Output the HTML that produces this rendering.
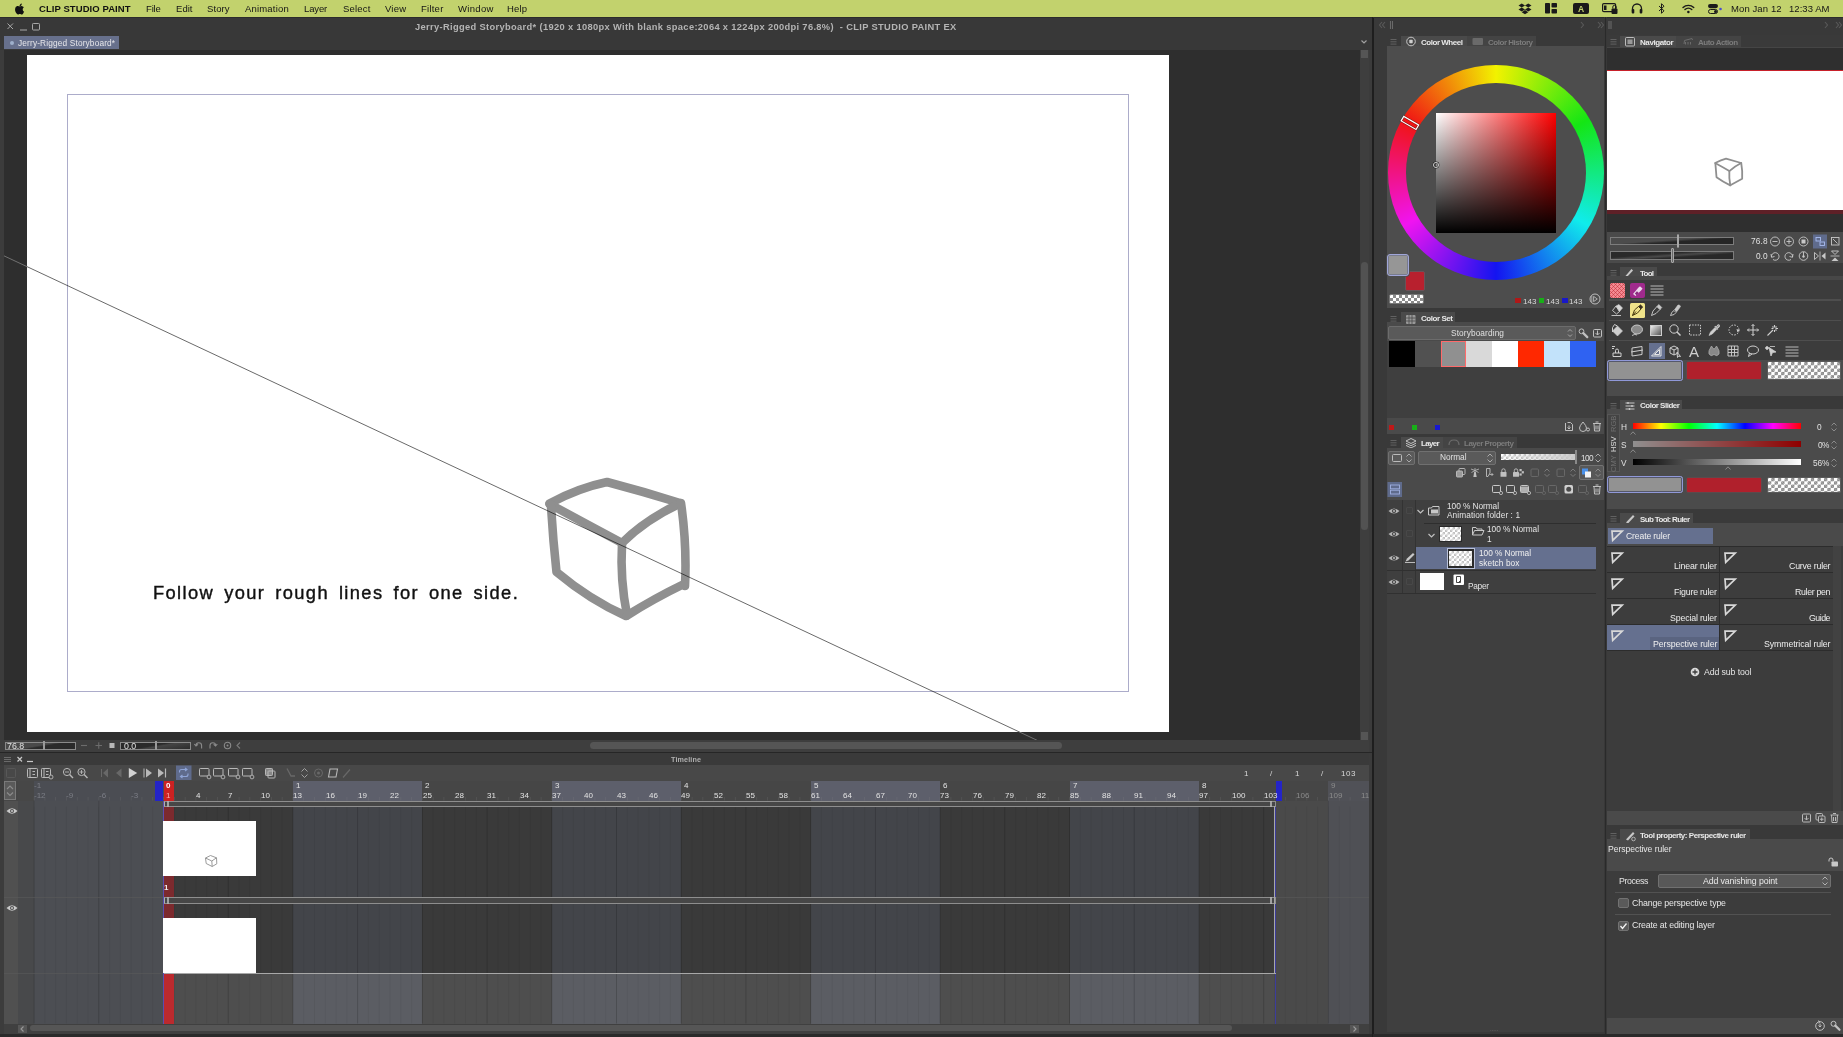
<!DOCTYPE html>
<html><head><meta charset="utf-8"><title>CLIP STUDIO PAINT</title>
<style>
html,body{margin:0;padding:0}
body{width:1843px;height:1037px;position:relative;overflow:hidden;background:#3b3b3b;-webkit-font-smoothing:antialiased;font-family:"Liberation Sans",sans-serif;}
div{position:absolute;box-sizing:border-box}
svg{position:absolute;overflow:visible}
.t{white-space:nowrap;line-height:1;will-change:transform;}
.ck{background-color:#fff;background-image:linear-gradient(45deg,#8c8c8c 25%,transparent 25%,transparent 75%,#8c8c8c 75%),linear-gradient(45deg,#8c8c8c 25%,transparent 25%,transparent 75%,#8c8c8c 75%);}
.ck2{background-color:#fff;background-image:linear-gradient(45deg,#c2c2c2 25%,transparent 25%,transparent 75%,#c2c2c2 75%),linear-gradient(45deg,#c2c2c2 25%,transparent 25%,transparent 75%,#c2c2c2 75%);}
</style></head><body>
<div style="left:0px;top:0px;width:1843px;height:17px;background:#c2d26d;"></div>
<svg style="left:14px;top:2px;" width="11" height="13" viewBox="0 0 11 13"><path d="M7.6 3.1c.6-.7.9-1.5.8-2.4-.8.1-1.6.5-2.1 1.1-.5.6-.9 1.400-.8 2.2.8.1 1.600-.3 2.100-.9zM8.400 3.700c-1.200-.1-2.100.700-2.700.700-.600 0-1.400-.600-2.300-.600-1.200 0-2.300.700-2.900 1.800-1.200 2.100-.300 5.300.900 7 .600.900 1.300 1.800 2.200 1.800.900 0 1.200-.600 2.300-.600s1.300.600 2.300.600c.900 0 1.500-.900 2.100-1.700.700-1 .900-1.900 1-2-.1 0-1.800-.700-1.800-2.700 0-1.700 1.400-2.500 1.400-2.500-.700-1.200-1.900-1.300-2.300-1.300z" transform="translate(1.1,1) scale(0.8)" fill="#111"/></svg>
<div class="t" style="left:38.7px;top:4px;font-size:9.5px;color:#111;font-weight:bold;letter-spacing:0.07px;">CLIP STUDIO PAINT</div>
<div class="t" style="left:145.5px;top:4px;font-size:9.5px;color:#151515;letter-spacing:-0.17px;">File</div>
<div class="t" style="left:175.5px;top:4px;font-size:9.5px;color:#151515;letter-spacing:0.04px;">Edit</div>
<div class="t" style="left:207.4px;top:4px;font-size:9.5px;color:#151515;letter-spacing:0.11px;">Story</div>
<div class="t" style="left:245.3px;top:4px;font-size:9.5px;color:#151515;letter-spacing:0.18px;">Animation</div>
<div class="t" style="left:303.8px;top:4px;font-size:9.5px;color:#151515;letter-spacing:-0.14px;">Layer</div>
<div class="t" style="left:342.6px;top:4px;font-size:9.5px;color:#151515;letter-spacing:0.20px;">Select</div>
<div class="t" style="left:385px;top:4px;font-size:9.5px;color:#151515;letter-spacing:0.19px;">View</div>
<div class="t" style="left:421.2px;top:4px;font-size:9.5px;color:#151515;letter-spacing:0.24px;">Filter</div>
<div class="t" style="left:457.6px;top:4px;font-size:9.5px;color:#151515;letter-spacing:0.32px;">Window</div>
<div class="t" style="left:507.4px;top:4px;font-size:9.5px;color:#151515;letter-spacing:0.19px;">Help</div>
<div class="t" style="left:1731px;top:4px;font-size:9.5px;color:#151515;letter-spacing:0.10px;">Mon Jan 12</div>
<div class="t" style="left:1788.5px;top:4px;font-size:9.5px;color:#151515;letter-spacing:0.05px;">12:33 AM</div>
<svg style="left:1518px;top:2px;transform:scale(0.93)" width="14" height="13" viewBox="0 0 14 13"><g fill="#1a1a1a"><path d="M3.5 1 L7 3.2 L3.5 5.400 L0 3.200Z"/><path d="M10.500 1 L14 3.200 L10.500 5.400 L7 3.200Z"/><path d="M3.500 5.400 L7 7.600 L3.500 9.800 L0 7.600Z" /><path d="M10.500 5.400 L14 7.600 L10.500 9.800 L7 7.600Z"/><path d="M3.500 10.400 L7 8.200 L10.500 10.400 L7 12.600Z"/></g></svg>
<svg style="left:1545px;top:3px;" width="12" height="11" viewBox="0 0 12 11"><g fill="#1a1a1a"><rect x="0" y="0" width="5" height="10.500" rx="0.800"/><rect x="6.500" y="0" width="5.500" height="4.500" rx="0.800"/><rect x="6.500" y="6" width="5.500" height="4.500" rx="0.800"/></g></svg>
<svg style="left:1573px;top:3px;" width="16" height="11" viewBox="0 0 16 11"><rect x="0" y="0" width="16" height="11" rx="2" fill="#1a1a1a"/></svg>
<div class="t" style="left:1578px;top:5px;font-size:8.5px;color:#c2d26d;font-weight:bold;">A</div>
<svg style="left:1602px;top:3px;" width="16" height="12" viewBox="0 0 16 12"><rect x="0.600" y="0.600" width="13" height="8" rx="1.200" fill="none" stroke="#1a1a1a" stroke-width="1.200"/><rect x="2" y="2.500" width="2.500" height="4.500" fill="#1a1a1a"/><rect x="9.500" y="5.500" width="6" height="5.500" rx="1" fill="#1a1a1a"/><path d="M10.800 5.500v-1.500a1.700 1.700 0 0 1 3.400 0v1.500" fill="none" stroke="#1a1a1a" stroke-width="1"/></svg>
<svg style="left:1631px;top:3px;" width="12" height="11" viewBox="0 0 12 11"><path d="M1.500 8.500v-3a4.500 4.500 0 0 1 9 0v3" fill="none" stroke="#1a1a1a" stroke-width="1.300"/><rect x="0.700" y="6" width="2.600" height="4.500" rx="1" fill="#1a1a1a"/><rect x="8.700" y="6" width="2.600" height="4.500" rx="1" fill="#1a1a1a"/></svg>
<svg style="left:1658px;top:3px;" width="8" height="11" viewBox="0 0 8 11"><path d="M1 3 L6 7.800 L3.500 10.300 V0.700 L6 3.200 L1 8" fill="none" stroke="#1a1a1a" stroke-width="1"/></svg>
<svg style="left:1681.5px;top:3.5px;" width="15" height="11" viewBox="0 0 15 11"><g transform="scale(0.85)"><g fill="none" stroke="#1a1a1a" stroke-width="1.700" stroke-linecap="round"><path d="M1.200 4.200a9 9 0 0 1 12.600 0"/><path d="M3.500 6.500a5.800 5.800 0 0 1 8 0"/></g><circle cx="7.500" cy="9.300" r="1.500" fill="#1a1a1a"/></g></svg>
<svg style="left:1708px;top:4px;" width="14" height="10" viewBox="0 0 14 10"><rect x="0" y="0" width="10" height="4.200" rx="2.100" fill="#1a1a1a"/><rect x="0.500" y="5.500" width="9" height="4" rx="2" fill="none" stroke="#1a1a1a" stroke-width="1"/><circle cx="7.500" cy="7.500" r="1.500" fill="#1a1a1a"/><circle cx="12.500" cy="5" r="1.300" fill="#4a4ad0"/></svg>
<div style="left:0px;top:17px;width:1373px;height:33px;background:#383838;"></div>
<div style="left:0px;top:17px;width:1373px;height:1px;background:#2c2c2c;"></div>
<div class="t" style="left:415px;top:23px;font-size:9.3px;color:#b4b4b4;font-weight:bold;letter-spacing:0.35px;">Jerry-Rigged Storyboard* (1920 x 1080px With blank space:2064 x 1224px 200dpi 76.8%)&nbsp; - CLIP STUDIO PAINT EX</div>
<svg style="left:6px;top:22px;" width="36" height="10" viewBox="0 0 36 10"><g fill="none" stroke="#a8a8a8" stroke-width="1"><path d="M1.500 1.500 L7 7 M7 1.500 L1.500 7"/><path d="M14 8 H21"/><rect x="26.500" y="1.500" width="7" height="6.500" rx="0.800"/></g></svg>
<div style="left:4px;top:36px;width:115px;height:13px;background:#67708c;"></div>
<div style="left:10px;top:41px;width:4px;height:4px;background:#9fb0cc;border-radius:2px;"></div>
<div class="t" style="left:17.5px;top:39px;font-size:8.3px;color:#e6e6ea;letter-spacing:0.15px;">Jerry-Rigged Storyboard*</div>
<svg style="left:1360px;top:39px;" width="8" height="6" viewBox="0 0 8 6"><path d="M1.500 1.500 L4 4 L6.500 1.500" fill="none" stroke="#a0a0a0" stroke-width="1.200"/></svg>
<div style="left:0px;top:50px;width:1369px;height:702px;background:#3c3c3c;"></div>
<div style="left:4px;top:50px;width:1356px;height:690px;background:#2e2e2e;"></div>
<div style="left:27px;top:55px;width:1141.5px;height:677px;background:#ffffff;"></div>
<div style="left:67px;top:94px;width:1062px;height:598px;border:1px solid #acacca;"></div>
<svg style="left:0;top:0" width="1369" height="752" viewBox="0 0 1369 752"><g fill="none" stroke="#8f8f8f" stroke-width="8.6" stroke-linecap="round" stroke-linejoin="round"><path d="M549.5 503.5 Q578 488 607 482 Q645 492 680 503"/><path d="M679 504 Q645 520 622 543"/><path d="M549.5 504 Q590 526 622 543"/><path d="M551 506 Q553 540 556.500 572 Q590 600 626 616"/><path d="M622 544 Q620 580 627 615"/><path d="M681 503 Q687 545 685 586"/><path d="M627 615.500 Q655 598 684 584"/></g></svg>
<svg style="left:4px;top:50px;overflow:hidden" width="23" height="690" viewBox="4 50 23 690"><line x1="3.9" y1="255.8" x2="1038.2" y2="740.8" stroke="#787878" stroke-width="0.9"/></svg>
<svg style="left:27px;top:732px;overflow:hidden" width="1100" height="9" viewBox="27 732 1100 9"><line x1="3.9" y1="255.8" x2="1038.2" y2="740.8" stroke="#787878" stroke-width="0.9"/></svg>
<svg style="left:27px;top:55px;overflow:hidden" width="1141.5" height="677" viewBox="27 55 1141.5 677"><line x1="3.9" y1="255.8" x2="1038.2" y2="740.8" stroke="#000" stroke-opacity="0.66" stroke-width="0.9"/></svg>
<div class="t" style="left:152.5px;top:584px;font-size:18.3px;color:#111;letter-spacing:1.39px;word-spacing:3.5px;-webkit-text-stroke:0.4px #111;">Follow your rough lines for one side.</div>
<div style="left:1360px;top:50px;width:9px;height:690px;background:#3e3e3e;"></div>
<div style="left:1361px;top:50px;width:7px;height:8px;background:#555;"></div>
<div style="left:1361px;top:732px;width:7px;height:8px;background:#555;"></div>
<div style="left:1361px;top:262px;width:7px;height:268px;background:#525252;border-radius:3.5px;"></div>
<div style="left:0px;top:740px;width:1369px;height:12px;background:#3e3e3e;"></div>
<div style="left:590px;top:741.5px;width:472px;height:7px;background:#555555;border-radius:3.5px;"></div>
<div style="left:0px;top:752px;width:1369px;height:285px;background:#3c3c3c;"></div>
<div style="left:0px;top:751.5px;width:1373px;height:1.5px;background:#262626;"></div>
<div style="left:0px;top:753px;width:1369px;height:12px;background:#3a3a3a;"></div>
<div class="t" style="left:671px;top:756px;font-size:7.2px;color:#b0b0b0;font-weight:bold;letter-spacing:0.13px;">Timeline</div>
<svg style="left:3px;top:754px;" width="30" height="10" viewBox="0 0 30 10"><g fill="none" stroke="#6a6a6a" stroke-width="1"><path d="M1 3.500H8M1 5.500H8M1 7.500H8"/></g><g fill="none" stroke="#c8c8c8" stroke-width="1.200"><path d="M14.500 3 L19 7.500 M19 3 L14.500 7.500"/><path d="M24 7.500H30"/></g></svg>
<div style="left:4px;top:765px;width:1365px;height:15.5px;background:#484848;"></div>
<div style="left:4px;top:780.5px;width:1365px;height:20px;background:#464646;"></div>
<div style="left:18px;top:780.5px;width:145.5px;height:20px;background:#4b4d53;"></div>
<div style="left:18px;top:780.5px;width:16px;height:20px;background:#474747;"></div>
<div style="left:4px;top:800.5px;width:14px;height:223px;background:#505050;"></div>
<div style="left:18px;top:800.5px;width:145.5px;height:223px;background:#4c4e53;"></div>
<div style="left:18px;top:800.5px;width:16px;height:223px;background:#48494b;"></div>
<div style="left:163.5px;top:800.5px;width:1111.0px;height:173px;background:#3a3a3a;"></div>
<div style="left:163.5px;top:973.5px;width:1111.0px;height:50px;background:#4e4e4e;"></div>
<div style="left:1274.5px;top:800.5px;width:94.5px;height:223px;background:#4a4a4a;"></div>
<div style="left:292.9px;top:780.5px;width:129.4px;height:20px;background:#5d5f6b;"></div>
<div style="left:292.9px;top:806.5px;width:129.4px;height:167px;background:#43454a;"></div>
<div style="left:292.9px;top:973.5px;width:129.4px;height:50px;background:#5b5d63;"></div>
<div style="left:551.8px;top:780.5px;width:129.4px;height:20px;background:#5d5f6b;"></div>
<div style="left:551.8px;top:806.5px;width:129.4px;height:167px;background:#43454a;"></div>
<div style="left:551.8px;top:973.5px;width:129.4px;height:50px;background:#5b5d63;"></div>
<div style="left:810.7px;top:780.5px;width:129.4px;height:20px;background:#5d5f6b;"></div>
<div style="left:810.7px;top:806.5px;width:129.4px;height:167px;background:#43454a;"></div>
<div style="left:810.7px;top:973.5px;width:129.4px;height:50px;background:#5b5d63;"></div>
<div style="left:1069.5px;top:780.5px;width:129.4px;height:20px;background:#5d5f6b;"></div>
<div style="left:1069.5px;top:806.5px;width:129.4px;height:167px;background:#43454a;"></div>
<div style="left:1069.5px;top:973.5px;width:129.4px;height:50px;background:#5b5d63;"></div>
<div style="left:1328.4px;top:780.5px;width:40.6px;height:20px;background:#505157;"></div>
<div style="left:1328.4px;top:800.5px;width:40.6px;height:223px;background:#4f5055;"></div>
<svg style="left:0;top:0" width="1369" height="1037" viewBox="0 0 1369 1037"><rect x="33.6" y="800.5" width="1" height="223" fill="#000" opacity="0.13"/><rect x="98.3" y="800.5" width="1" height="223" fill="#000" opacity="0.13"/><rect x="163.0" y="800.5" width="1" height="223" fill="#000" opacity="0.13"/><rect x="227.7" y="800.5" width="1" height="223" fill="#000" opacity="0.13"/><rect x="292.4" y="800.5" width="1" height="223" fill="#000" opacity="0.13"/><rect x="357.1" y="800.5" width="1" height="223" fill="#000" opacity="0.13"/><rect x="421.9" y="800.5" width="1" height="223" fill="#000" opacity="0.13"/><rect x="486.6" y="800.5" width="1" height="223" fill="#000" opacity="0.13"/><rect x="551.3" y="800.5" width="1" height="223" fill="#000" opacity="0.13"/><rect x="616.0" y="800.5" width="1" height="223" fill="#000" opacity="0.13"/><rect x="680.7" y="800.5" width="1" height="223" fill="#000" opacity="0.13"/><rect x="745.4" y="800.5" width="1" height="223" fill="#000" opacity="0.13"/><rect x="810.2" y="800.5" width="1" height="223" fill="#000" opacity="0.13"/><rect x="874.9" y="800.5" width="1" height="223" fill="#000" opacity="0.13"/><rect x="939.6" y="800.5" width="1" height="223" fill="#000" opacity="0.13"/><rect x="1004.3" y="800.5" width="1" height="223" fill="#000" opacity="0.13"/><rect x="1069.0" y="800.5" width="1" height="223" fill="#000" opacity="0.13"/><rect x="1133.7" y="800.5" width="1" height="223" fill="#000" opacity="0.13"/><rect x="1198.5" y="800.5" width="1" height="223" fill="#000" opacity="0.13"/><rect x="1263.2" y="800.5" width="1" height="223" fill="#000" opacity="0.13"/><rect x="1327.9" y="800.5" width="1" height="223" fill="#000" opacity="0.13"/><rect x="33.6" y="806.5" width="1" height="217" fill="#000" opacity="0.05"/><rect x="33.8" y="797" width="0.7" height="3.5" fill="#8a8a8a" opacity="0.25"/><rect x="44.4" y="806.5" width="1" height="217" fill="#000" opacity="0.05"/><rect x="44.6" y="797" width="0.7" height="3.5" fill="#8a8a8a" opacity="0.25"/><rect x="55.1" y="806.5" width="1" height="217" fill="#000" opacity="0.05"/><rect x="55.3" y="797" width="0.7" height="3.5" fill="#8a8a8a" opacity="0.25"/><rect x="65.9" y="806.5" width="1" height="217" fill="#000" opacity="0.05"/><rect x="66.1" y="797" width="0.7" height="3.5" fill="#8a8a8a" opacity="0.25"/><rect x="76.7" y="806.5" width="1" height="217" fill="#000" opacity="0.05"/><rect x="76.9" y="797" width="0.7" height="3.5" fill="#8a8a8a" opacity="0.25"/><rect x="87.5" y="806.5" width="1" height="217" fill="#000" opacity="0.05"/><rect x="87.7" y="797" width="0.7" height="3.5" fill="#8a8a8a" opacity="0.25"/><rect x="98.3" y="806.5" width="1" height="217" fill="#000" opacity="0.05"/><rect x="98.5" y="797" width="0.7" height="3.5" fill="#8a8a8a" opacity="0.25"/><rect x="109.1" y="806.5" width="1" height="217" fill="#000" opacity="0.05"/><rect x="109.3" y="797" width="0.7" height="3.5" fill="#8a8a8a" opacity="0.25"/><rect x="119.9" y="806.5" width="1" height="217" fill="#000" opacity="0.05"/><rect x="120.1" y="797" width="0.7" height="3.5" fill="#8a8a8a" opacity="0.25"/><rect x="130.6" y="806.5" width="1" height="217" fill="#000" opacity="0.05"/><rect x="130.8" y="797" width="0.7" height="3.5" fill="#8a8a8a" opacity="0.25"/><rect x="141.4" y="806.5" width="1" height="217" fill="#000" opacity="0.05"/><rect x="141.6" y="797" width="0.7" height="3.5" fill="#8a8a8a" opacity="0.25"/><rect x="152.2" y="806.5" width="1" height="217" fill="#000" opacity="0.05"/><rect x="152.4" y="797" width="0.7" height="3.5" fill="#8a8a8a" opacity="0.25"/><rect x="163.0" y="806.5" width="1" height="217" fill="#000" opacity="0.05"/><rect x="163.2" y="797" width="0.7" height="3.5" fill="#8a8a8a" opacity="0.25"/><rect x="173.8" y="806.5" width="1" height="217" fill="#000" opacity="0.05"/><rect x="174.0" y="797" width="0.7" height="3.5" fill="#8a8a8a" opacity="0.25"/><rect x="184.6" y="806.5" width="1" height="217" fill="#000" opacity="0.05"/><rect x="184.8" y="797" width="0.7" height="3.5" fill="#8a8a8a" opacity="0.25"/><rect x="195.4" y="806.5" width="1" height="217" fill="#000" opacity="0.05"/><rect x="195.6" y="797" width="0.7" height="3.5" fill="#8a8a8a" opacity="0.25"/><rect x="206.1" y="806.5" width="1" height="217" fill="#000" opacity="0.05"/><rect x="206.3" y="797" width="0.7" height="3.5" fill="#8a8a8a" opacity="0.25"/><rect x="216.9" y="806.5" width="1" height="217" fill="#000" opacity="0.05"/><rect x="217.1" y="797" width="0.7" height="3.5" fill="#8a8a8a" opacity="0.25"/><rect x="227.7" y="806.5" width="1" height="217" fill="#000" opacity="0.05"/><rect x="227.9" y="797" width="0.7" height="3.5" fill="#8a8a8a" opacity="0.25"/><rect x="238.5" y="806.5" width="1" height="217" fill="#000" opacity="0.05"/><rect x="238.7" y="797" width="0.7" height="3.5" fill="#8a8a8a" opacity="0.25"/><rect x="249.3" y="806.5" width="1" height="217" fill="#000" opacity="0.05"/><rect x="249.5" y="797" width="0.7" height="3.5" fill="#8a8a8a" opacity="0.25"/><rect x="260.1" y="806.5" width="1" height="217" fill="#000" opacity="0.05"/><rect x="260.3" y="797" width="0.7" height="3.5" fill="#8a8a8a" opacity="0.25"/><rect x="270.9" y="806.5" width="1" height="217" fill="#000" opacity="0.05"/><rect x="271.1" y="797" width="0.7" height="3.5" fill="#8a8a8a" opacity="0.25"/><rect x="281.6" y="806.5" width="1" height="217" fill="#000" opacity="0.05"/><rect x="281.8" y="797" width="0.7" height="3.5" fill="#8a8a8a" opacity="0.25"/><rect x="292.4" y="806.5" width="1" height="217" fill="#000" opacity="0.05"/><rect x="292.6" y="797" width="0.7" height="3.5" fill="#8a8a8a" opacity="0.25"/><rect x="303.2" y="806.5" width="1" height="217" fill="#000" opacity="0.05"/><rect x="303.4" y="797" width="0.7" height="3.5" fill="#8a8a8a" opacity="0.25"/><rect x="314.0" y="806.5" width="1" height="217" fill="#000" opacity="0.05"/><rect x="314.2" y="797" width="0.7" height="3.5" fill="#8a8a8a" opacity="0.25"/><rect x="324.8" y="806.5" width="1" height="217" fill="#000" opacity="0.05"/><rect x="325.0" y="797" width="0.7" height="3.5" fill="#8a8a8a" opacity="0.25"/><rect x="335.6" y="806.5" width="1" height="217" fill="#000" opacity="0.05"/><rect x="335.8" y="797" width="0.7" height="3.5" fill="#8a8a8a" opacity="0.25"/><rect x="346.4" y="806.5" width="1" height="217" fill="#000" opacity="0.05"/><rect x="346.6" y="797" width="0.7" height="3.5" fill="#8a8a8a" opacity="0.25"/><rect x="357.1" y="806.5" width="1" height="217" fill="#000" opacity="0.05"/><rect x="357.3" y="797" width="0.7" height="3.5" fill="#8a8a8a" opacity="0.25"/><rect x="367.9" y="806.5" width="1" height="217" fill="#000" opacity="0.05"/><rect x="368.1" y="797" width="0.7" height="3.5" fill="#8a8a8a" opacity="0.25"/><rect x="378.7" y="806.5" width="1" height="217" fill="#000" opacity="0.05"/><rect x="378.9" y="797" width="0.7" height="3.5" fill="#8a8a8a" opacity="0.25"/><rect x="389.5" y="806.5" width="1" height="217" fill="#000" opacity="0.05"/><rect x="389.7" y="797" width="0.7" height="3.5" fill="#8a8a8a" opacity="0.25"/><rect x="400.3" y="806.5" width="1" height="217" fill="#000" opacity="0.05"/><rect x="400.5" y="797" width="0.7" height="3.5" fill="#8a8a8a" opacity="0.25"/><rect x="411.1" y="806.5" width="1" height="217" fill="#000" opacity="0.05"/><rect x="411.3" y="797" width="0.7" height="3.5" fill="#8a8a8a" opacity="0.25"/><rect x="421.9" y="806.5" width="1" height="217" fill="#000" opacity="0.05"/><rect x="422.1" y="797" width="0.7" height="3.5" fill="#8a8a8a" opacity="0.25"/><rect x="432.6" y="806.5" width="1" height="217" fill="#000" opacity="0.05"/><rect x="432.8" y="797" width="0.7" height="3.5" fill="#8a8a8a" opacity="0.25"/><rect x="443.4" y="806.5" width="1" height="217" fill="#000" opacity="0.05"/><rect x="443.6" y="797" width="0.7" height="3.5" fill="#8a8a8a" opacity="0.25"/><rect x="454.2" y="806.5" width="1" height="217" fill="#000" opacity="0.05"/><rect x="454.4" y="797" width="0.7" height="3.5" fill="#8a8a8a" opacity="0.25"/><rect x="465.0" y="806.5" width="1" height="217" fill="#000" opacity="0.05"/><rect x="465.2" y="797" width="0.7" height="3.5" fill="#8a8a8a" opacity="0.25"/><rect x="475.8" y="806.5" width="1" height="217" fill="#000" opacity="0.05"/><rect x="476.0" y="797" width="0.7" height="3.5" fill="#8a8a8a" opacity="0.25"/><rect x="486.6" y="806.5" width="1" height="217" fill="#000" opacity="0.05"/><rect x="486.8" y="797" width="0.7" height="3.5" fill="#8a8a8a" opacity="0.25"/><rect x="497.4" y="806.5" width="1" height="217" fill="#000" opacity="0.05"/><rect x="497.6" y="797" width="0.7" height="3.5" fill="#8a8a8a" opacity="0.25"/><rect x="508.2" y="806.5" width="1" height="217" fill="#000" opacity="0.05"/><rect x="508.4" y="797" width="0.7" height="3.5" fill="#8a8a8a" opacity="0.25"/><rect x="518.9" y="806.5" width="1" height="217" fill="#000" opacity="0.05"/><rect x="519.1" y="797" width="0.7" height="3.5" fill="#8a8a8a" opacity="0.25"/><rect x="529.7" y="806.5" width="1" height="217" fill="#000" opacity="0.05"/><rect x="529.9" y="797" width="0.7" height="3.5" fill="#8a8a8a" opacity="0.25"/><rect x="540.5" y="806.5" width="1" height="217" fill="#000" opacity="0.05"/><rect x="540.7" y="797" width="0.7" height="3.5" fill="#8a8a8a" opacity="0.25"/><rect x="551.3" y="806.5" width="1" height="217" fill="#000" opacity="0.05"/><rect x="551.5" y="797" width="0.7" height="3.5" fill="#8a8a8a" opacity="0.25"/><rect x="562.1" y="806.5" width="1" height="217" fill="#000" opacity="0.05"/><rect x="562.3" y="797" width="0.7" height="3.5" fill="#8a8a8a" opacity="0.25"/><rect x="572.9" y="806.5" width="1" height="217" fill="#000" opacity="0.05"/><rect x="573.1" y="797" width="0.7" height="3.5" fill="#8a8a8a" opacity="0.25"/><rect x="583.7" y="806.5" width="1" height="217" fill="#000" opacity="0.05"/><rect x="583.9" y="797" width="0.7" height="3.5" fill="#8a8a8a" opacity="0.25"/><rect x="594.4" y="806.5" width="1" height="217" fill="#000" opacity="0.05"/><rect x="594.6" y="797" width="0.7" height="3.5" fill="#8a8a8a" opacity="0.25"/><rect x="605.2" y="806.5" width="1" height="217" fill="#000" opacity="0.05"/><rect x="605.4" y="797" width="0.7" height="3.5" fill="#8a8a8a" opacity="0.25"/><rect x="616.0" y="806.5" width="1" height="217" fill="#000" opacity="0.05"/><rect x="616.2" y="797" width="0.7" height="3.5" fill="#8a8a8a" opacity="0.25"/><rect x="626.8" y="806.5" width="1" height="217" fill="#000" opacity="0.05"/><rect x="627.0" y="797" width="0.7" height="3.5" fill="#8a8a8a" opacity="0.25"/><rect x="637.6" y="806.5" width="1" height="217" fill="#000" opacity="0.05"/><rect x="637.8" y="797" width="0.7" height="3.5" fill="#8a8a8a" opacity="0.25"/><rect x="648.4" y="806.5" width="1" height="217" fill="#000" opacity="0.05"/><rect x="648.6" y="797" width="0.7" height="3.5" fill="#8a8a8a" opacity="0.25"/><rect x="659.2" y="806.5" width="1" height="217" fill="#000" opacity="0.05"/><rect x="659.4" y="797" width="0.7" height="3.5" fill="#8a8a8a" opacity="0.25"/><rect x="669.9" y="806.5" width="1" height="217" fill="#000" opacity="0.05"/><rect x="670.1" y="797" width="0.7" height="3.5" fill="#8a8a8a" opacity="0.25"/><rect x="680.7" y="806.5" width="1" height="217" fill="#000" opacity="0.05"/><rect x="680.9" y="797" width="0.7" height="3.5" fill="#8a8a8a" opacity="0.25"/><rect x="691.5" y="806.5" width="1" height="217" fill="#000" opacity="0.05"/><rect x="691.7" y="797" width="0.7" height="3.5" fill="#8a8a8a" opacity="0.25"/><rect x="702.3" y="806.5" width="1" height="217" fill="#000" opacity="0.05"/><rect x="702.5" y="797" width="0.7" height="3.5" fill="#8a8a8a" opacity="0.25"/><rect x="713.1" y="806.5" width="1" height="217" fill="#000" opacity="0.05"/><rect x="713.3" y="797" width="0.7" height="3.5" fill="#8a8a8a" opacity="0.25"/><rect x="723.9" y="806.5" width="1" height="217" fill="#000" opacity="0.05"/><rect x="724.1" y="797" width="0.7" height="3.5" fill="#8a8a8a" opacity="0.25"/><rect x="734.7" y="806.5" width="1" height="217" fill="#000" opacity="0.05"/><rect x="734.9" y="797" width="0.7" height="3.5" fill="#8a8a8a" opacity="0.25"/><rect x="745.4" y="806.5" width="1" height="217" fill="#000" opacity="0.05"/><rect x="745.6" y="797" width="0.7" height="3.5" fill="#8a8a8a" opacity="0.25"/><rect x="756.2" y="806.5" width="1" height="217" fill="#000" opacity="0.05"/><rect x="756.4" y="797" width="0.7" height="3.5" fill="#8a8a8a" opacity="0.25"/><rect x="767.0" y="806.5" width="1" height="217" fill="#000" opacity="0.05"/><rect x="767.2" y="797" width="0.7" height="3.5" fill="#8a8a8a" opacity="0.25"/><rect x="777.8" y="806.5" width="1" height="217" fill="#000" opacity="0.05"/><rect x="778.0" y="797" width="0.7" height="3.5" fill="#8a8a8a" opacity="0.25"/><rect x="788.6" y="806.5" width="1" height="217" fill="#000" opacity="0.05"/><rect x="788.8" y="797" width="0.7" height="3.5" fill="#8a8a8a" opacity="0.25"/><rect x="799.4" y="806.5" width="1" height="217" fill="#000" opacity="0.05"/><rect x="799.6" y="797" width="0.7" height="3.5" fill="#8a8a8a" opacity="0.25"/><rect x="810.2" y="806.5" width="1" height="217" fill="#000" opacity="0.05"/><rect x="810.4" y="797" width="0.7" height="3.5" fill="#8a8a8a" opacity="0.25"/><rect x="820.9" y="806.5" width="1" height="217" fill="#000" opacity="0.05"/><rect x="821.1" y="797" width="0.7" height="3.5" fill="#8a8a8a" opacity="0.25"/><rect x="831.7" y="806.5" width="1" height="217" fill="#000" opacity="0.05"/><rect x="831.9" y="797" width="0.7" height="3.5" fill="#8a8a8a" opacity="0.25"/><rect x="842.5" y="806.5" width="1" height="217" fill="#000" opacity="0.05"/><rect x="842.7" y="797" width="0.7" height="3.5" fill="#8a8a8a" opacity="0.25"/><rect x="853.3" y="806.5" width="1" height="217" fill="#000" opacity="0.05"/><rect x="853.5" y="797" width="0.7" height="3.5" fill="#8a8a8a" opacity="0.25"/><rect x="864.1" y="806.5" width="1" height="217" fill="#000" opacity="0.05"/><rect x="864.3" y="797" width="0.7" height="3.5" fill="#8a8a8a" opacity="0.25"/><rect x="874.9" y="806.5" width="1" height="217" fill="#000" opacity="0.05"/><rect x="875.1" y="797" width="0.7" height="3.5" fill="#8a8a8a" opacity="0.25"/><rect x="885.7" y="806.5" width="1" height="217" fill="#000" opacity="0.05"/><rect x="885.9" y="797" width="0.7" height="3.5" fill="#8a8a8a" opacity="0.25"/><rect x="896.4" y="806.5" width="1" height="217" fill="#000" opacity="0.05"/><rect x="896.6" y="797" width="0.7" height="3.5" fill="#8a8a8a" opacity="0.25"/><rect x="907.2" y="806.5" width="1" height="217" fill="#000" opacity="0.05"/><rect x="907.4" y="797" width="0.7" height="3.5" fill="#8a8a8a" opacity="0.25"/><rect x="918.0" y="806.5" width="1" height="217" fill="#000" opacity="0.05"/><rect x="918.2" y="797" width="0.7" height="3.5" fill="#8a8a8a" opacity="0.25"/><rect x="928.8" y="806.5" width="1" height="217" fill="#000" opacity="0.05"/><rect x="929.0" y="797" width="0.7" height="3.5" fill="#8a8a8a" opacity="0.25"/><rect x="939.6" y="806.5" width="1" height="217" fill="#000" opacity="0.05"/><rect x="939.8" y="797" width="0.7" height="3.5" fill="#8a8a8a" opacity="0.25"/><rect x="950.4" y="806.5" width="1" height="217" fill="#000" opacity="0.05"/><rect x="950.6" y="797" width="0.7" height="3.5" fill="#8a8a8a" opacity="0.25"/><rect x="961.2" y="806.5" width="1" height="217" fill="#000" opacity="0.05"/><rect x="961.4" y="797" width="0.7" height="3.5" fill="#8a8a8a" opacity="0.25"/><rect x="971.9" y="806.5" width="1" height="217" fill="#000" opacity="0.05"/><rect x="972.1" y="797" width="0.7" height="3.5" fill="#8a8a8a" opacity="0.25"/><rect x="982.7" y="806.5" width="1" height="217" fill="#000" opacity="0.05"/><rect x="982.9" y="797" width="0.7" height="3.5" fill="#8a8a8a" opacity="0.25"/><rect x="993.5" y="806.5" width="1" height="217" fill="#000" opacity="0.05"/><rect x="993.7" y="797" width="0.7" height="3.5" fill="#8a8a8a" opacity="0.25"/><rect x="1004.3" y="806.5" width="1" height="217" fill="#000" opacity="0.05"/><rect x="1004.5" y="797" width="0.7" height="3.5" fill="#8a8a8a" opacity="0.25"/><rect x="1015.1" y="806.5" width="1" height="217" fill="#000" opacity="0.05"/><rect x="1015.3" y="797" width="0.7" height="3.5" fill="#8a8a8a" opacity="0.25"/><rect x="1025.9" y="806.5" width="1" height="217" fill="#000" opacity="0.05"/><rect x="1026.1" y="797" width="0.7" height="3.5" fill="#8a8a8a" opacity="0.25"/><rect x="1036.7" y="806.5" width="1" height="217" fill="#000" opacity="0.05"/><rect x="1036.9" y="797" width="0.7" height="3.5" fill="#8a8a8a" opacity="0.25"/><rect x="1047.5" y="806.5" width="1" height="217" fill="#000" opacity="0.05"/><rect x="1047.7" y="797" width="0.7" height="3.5" fill="#8a8a8a" opacity="0.25"/><rect x="1058.2" y="806.5" width="1" height="217" fill="#000" opacity="0.05"/><rect x="1058.4" y="797" width="0.7" height="3.5" fill="#8a8a8a" opacity="0.25"/><rect x="1069.0" y="806.5" width="1" height="217" fill="#000" opacity="0.05"/><rect x="1069.2" y="797" width="0.7" height="3.5" fill="#8a8a8a" opacity="0.25"/><rect x="1079.8" y="806.5" width="1" height="217" fill="#000" opacity="0.05"/><rect x="1080.0" y="797" width="0.7" height="3.5" fill="#8a8a8a" opacity="0.25"/><rect x="1090.6" y="806.5" width="1" height="217" fill="#000" opacity="0.05"/><rect x="1090.8" y="797" width="0.7" height="3.5" fill="#8a8a8a" opacity="0.25"/><rect x="1101.4" y="806.5" width="1" height="217" fill="#000" opacity="0.05"/><rect x="1101.6" y="797" width="0.7" height="3.5" fill="#8a8a8a" opacity="0.25"/><rect x="1112.2" y="806.5" width="1" height="217" fill="#000" opacity="0.05"/><rect x="1112.4" y="797" width="0.7" height="3.5" fill="#8a8a8a" opacity="0.25"/><rect x="1123.0" y="806.5" width="1" height="217" fill="#000" opacity="0.05"/><rect x="1123.2" y="797" width="0.7" height="3.5" fill="#8a8a8a" opacity="0.25"/><rect x="1133.7" y="806.5" width="1" height="217" fill="#000" opacity="0.05"/><rect x="1133.9" y="797" width="0.7" height="3.5" fill="#8a8a8a" opacity="0.25"/><rect x="1144.5" y="806.5" width="1" height="217" fill="#000" opacity="0.05"/><rect x="1144.7" y="797" width="0.7" height="3.5" fill="#8a8a8a" opacity="0.25"/><rect x="1155.3" y="806.5" width="1" height="217" fill="#000" opacity="0.05"/><rect x="1155.5" y="797" width="0.7" height="3.5" fill="#8a8a8a" opacity="0.25"/><rect x="1166.1" y="806.5" width="1" height="217" fill="#000" opacity="0.05"/><rect x="1166.3" y="797" width="0.7" height="3.5" fill="#8a8a8a" opacity="0.25"/><rect x="1176.9" y="806.5" width="1" height="217" fill="#000" opacity="0.05"/><rect x="1177.1" y="797" width="0.7" height="3.5" fill="#8a8a8a" opacity="0.25"/><rect x="1187.7" y="806.5" width="1" height="217" fill="#000" opacity="0.05"/><rect x="1187.9" y="797" width="0.7" height="3.5" fill="#8a8a8a" opacity="0.25"/><rect x="1198.5" y="806.5" width="1" height="217" fill="#000" opacity="0.05"/><rect x="1198.7" y="797" width="0.7" height="3.5" fill="#8a8a8a" opacity="0.25"/><rect x="1209.2" y="806.5" width="1" height="217" fill="#000" opacity="0.05"/><rect x="1209.4" y="797" width="0.7" height="3.5" fill="#8a8a8a" opacity="0.25"/><rect x="1220.0" y="806.5" width="1" height="217" fill="#000" opacity="0.05"/><rect x="1220.2" y="797" width="0.7" height="3.5" fill="#8a8a8a" opacity="0.25"/><rect x="1230.8" y="806.5" width="1" height="217" fill="#000" opacity="0.05"/><rect x="1231.0" y="797" width="0.7" height="3.5" fill="#8a8a8a" opacity="0.25"/><rect x="1241.6" y="806.5" width="1" height="217" fill="#000" opacity="0.05"/><rect x="1241.8" y="797" width="0.7" height="3.5" fill="#8a8a8a" opacity="0.25"/><rect x="1252.4" y="806.5" width="1" height="217" fill="#000" opacity="0.05"/><rect x="1252.6" y="797" width="0.7" height="3.5" fill="#8a8a8a" opacity="0.25"/><rect x="1263.2" y="806.5" width="1" height="217" fill="#000" opacity="0.05"/><rect x="1263.4" y="797" width="0.7" height="3.5" fill="#8a8a8a" opacity="0.25"/><rect x="1274.0" y="806.5" width="1" height="217" fill="#000" opacity="0.05"/><rect x="1274.2" y="797" width="0.7" height="3.5" fill="#8a8a8a" opacity="0.25"/><rect x="1284.7" y="806.5" width="1" height="217" fill="#000" opacity="0.05"/><rect x="1284.9" y="797" width="0.7" height="3.5" fill="#8a8a8a" opacity="0.25"/><rect x="1295.5" y="806.5" width="1" height="217" fill="#000" opacity="0.05"/><rect x="1295.7" y="797" width="0.7" height="3.5" fill="#8a8a8a" opacity="0.25"/><rect x="1306.3" y="806.5" width="1" height="217" fill="#000" opacity="0.05"/><rect x="1306.5" y="797" width="0.7" height="3.5" fill="#8a8a8a" opacity="0.25"/><rect x="1317.1" y="806.5" width="1" height="217" fill="#000" opacity="0.05"/><rect x="1317.3" y="797" width="0.7" height="3.5" fill="#8a8a8a" opacity="0.25"/><rect x="1327.9" y="806.5" width="1" height="217" fill="#000" opacity="0.05"/><rect x="1328.1" y="797" width="0.7" height="3.5" fill="#8a8a8a" opacity="0.25"/><rect x="1338.7" y="806.5" width="1" height="217" fill="#000" opacity="0.05"/><rect x="1338.9" y="797" width="0.7" height="3.5" fill="#8a8a8a" opacity="0.25"/><rect x="1349.5" y="806.5" width="1" height="217" fill="#000" opacity="0.05"/><rect x="1349.7" y="797" width="0.7" height="3.5" fill="#8a8a8a" opacity="0.25"/></svg>
<div style="left:4px;top:897px;width:1365px;height:1px;background:#5a5a5a;opacity:.6;"></div>
<div style="left:4px;top:973px;width:159.5px;height:1px;background:#5a5a5a;opacity:.6;"></div>
<div style="left:163.5px;top:780.5px;width:10.8px;height:20px;background:#cc2222;"></div>
<div style="left:163.5px;top:806.5px;width:10.8px;height:167px;background:#7c2a2e;"></div>
<div style="left:163.5px;top:974px;width:10.8px;height:49.5px;background:#bb2a2e;"></div>
<div style="left:155.3px;top:780.5px;width:8.2px;height:20px;background:#2424c8;"></div>
<div style="left:162.7px;top:800.5px;width:1.2px;height:223px;background:#5c4cb0;"></div>
<div style="left:1275.7px;top:780.5px;width:6.3px;height:20px;background:#2424c8;"></div>
<div style="left:1274.6px;top:800.5px;width:1.6px;height:223px;background:#3c3c9c;"></div>
<div style="left:163.5px;top:801.3px;width:1112.0px;height:5.4px;background:#474747;border:1px solid #8e8e8e;border-left:1px solid #b0b0b0;"></div>
<div style="left:166.5px;top:801.3px;width:2px;height:5.4px;background:#b8b8b8;opacity:.8;"></div>
<div style="left:1270px;top:801.3px;width:2px;height:5.4px;background:#b8b8b8;opacity:.8;"></div>
<div style="left:163.5px;top:897.4px;width:1112.0px;height:6.2px;background:#474747;border:1px solid #8e8e8e;border-left:1px solid #b0b0b0;"></div>
<div style="left:166.5px;top:897.4px;width:2px;height:6.2px;background:#b8b8b8;opacity:.8;"></div>
<div style="left:1270px;top:897.4px;width:2px;height:6.2px;background:#b8b8b8;opacity:.8;"></div>
<div style="left:163.5px;top:973px;width:1112.0px;height:1px;background:#a8a8a8;"></div>
<div style="left:1274px;top:806px;width:1px;height:167px;background:#a8a8a8;"></div>
<div style="left:163.3px;top:821px;width:92.3px;height:54.6px;background:#ffffff;"></div>
<div style="left:163.3px;top:918px;width:92.3px;height:55.2px;background:#ffffff;"></div>
<svg style="left:204px;top:854px;" width="14" height="13" viewBox="0 0 14 13"><g fill="none" stroke="#8f8f8f" stroke-width="0.900" stroke-linejoin="round"><path d="M1.500 4 L6.500 1.500 L12.500 3.800 L7.800 7 Z"/><path d="M1.500 4 L2.200 9.500 L8.200 12.500 L7.800 7"/><path d="M12.500 3.800 L12.800 9.800 L8.200 12.500"/></g></svg>
<div class="t" style="left:163.5px;top:884px;font-size:8px;color:#f0f0f0;font-weight:bold;">1</div>
<div class="t" style="left:166.1px;top:792px;font-size:8px;color:#f4b0b0;">1</div>
<div class="t" style="left:196.1px;top:792px;font-size:8px;color:#e2e2e2;">4</div>
<div class="t" style="left:228.4px;top:792px;font-size:8px;color:#e2e2e2;">7</div>
<div class="t" style="left:260.8px;top:792px;font-size:8px;color:#e2e2e2;">10</div>
<div class="t" style="left:293.1px;top:792px;font-size:8px;color:#e2e2e2;">13</div>
<div class="t" style="left:325.5px;top:792px;font-size:8px;color:#e2e2e2;">16</div>
<div class="t" style="left:357.8px;top:792px;font-size:8px;color:#e2e2e2;">19</div>
<div class="t" style="left:390.2px;top:792px;font-size:8px;color:#e2e2e2;">22</div>
<div class="t" style="left:422.6px;top:792px;font-size:8px;color:#e2e2e2;">25</div>
<div class="t" style="left:454.9px;top:792px;font-size:8px;color:#e2e2e2;">28</div>
<div class="t" style="left:487.3px;top:792px;font-size:8px;color:#e2e2e2;">31</div>
<div class="t" style="left:519.6px;top:792px;font-size:8px;color:#e2e2e2;">34</div>
<div class="t" style="left:552.0px;top:792px;font-size:8px;color:#e2e2e2;">37</div>
<div class="t" style="left:584.4px;top:792px;font-size:8px;color:#e2e2e2;">40</div>
<div class="t" style="left:616.7px;top:792px;font-size:8px;color:#e2e2e2;">43</div>
<div class="t" style="left:649.1px;top:792px;font-size:8px;color:#e2e2e2;">46</div>
<div class="t" style="left:681.4px;top:792px;font-size:8px;color:#e2e2e2;">49</div>
<div class="t" style="left:713.8px;top:792px;font-size:8px;color:#e2e2e2;">52</div>
<div class="t" style="left:746.1px;top:792px;font-size:8px;color:#e2e2e2;">55</div>
<div class="t" style="left:778.5px;top:792px;font-size:8px;color:#e2e2e2;">58</div>
<div class="t" style="left:810.9px;top:792px;font-size:8px;color:#e2e2e2;">61</div>
<div class="t" style="left:843.2px;top:792px;font-size:8px;color:#e2e2e2;">64</div>
<div class="t" style="left:875.6px;top:792px;font-size:8px;color:#e2e2e2;">67</div>
<div class="t" style="left:907.9px;top:792px;font-size:8px;color:#e2e2e2;">70</div>
<div class="t" style="left:940.3px;top:792px;font-size:8px;color:#e2e2e2;">73</div>
<div class="t" style="left:972.6px;top:792px;font-size:8px;color:#e2e2e2;">76</div>
<div class="t" style="left:1005.0px;top:792px;font-size:8px;color:#e2e2e2;">79</div>
<div class="t" style="left:1037.4px;top:792px;font-size:8px;color:#e2e2e2;">82</div>
<div class="t" style="left:1069.7px;top:792px;font-size:8px;color:#e2e2e2;">85</div>
<div class="t" style="left:1102.1px;top:792px;font-size:8px;color:#e2e2e2;">88</div>
<div class="t" style="left:1134.4px;top:792px;font-size:8px;color:#e2e2e2;">91</div>
<div class="t" style="left:1166.8px;top:792px;font-size:8px;color:#e2e2e2;">94</div>
<div class="t" style="left:1199.2px;top:792px;font-size:8px;color:#e2e2e2;">97</div>
<div class="t" style="left:1231.5px;top:792px;font-size:8px;color:#e2e2e2;">100</div>
<div class="t" style="left:1263.9px;top:792px;font-size:8px;color:#e2e2e2;">103</div>
<div class="t" style="left:1296.2px;top:792px;font-size:8px;color:#8c8c8c;">106</div>
<div class="t" style="left:1328.6px;top:792px;font-size:8px;color:#8c8c8c;width:40.4px;overflow:hidden;">109</div>
<div class="t" style="left:1360.9px;top:792px;font-size:8px;color:#8c8c8c;width:8.1px;overflow:hidden;">11</div>
<div class="t" style="left:166.1px;top:782px;font-size:8px;color:#fff;font-weight:bold;">0</div>
<div class="t" style="left:295.9px;top:782px;font-size:8px;color:#e2e2e2;">1</div>
<div class="t" style="left:425.4px;top:782px;font-size:8px;color:#e2e2e2;">2</div>
<div class="t" style="left:554.8px;top:782px;font-size:8px;color:#e2e2e2;">3</div>
<div class="t" style="left:684.2px;top:782px;font-size:8px;color:#e2e2e2;">4</div>
<div class="t" style="left:813.7px;top:782px;font-size:8px;color:#e2e2e2;">5</div>
<div class="t" style="left:943.1px;top:782px;font-size:8px;color:#e2e2e2;">6</div>
<div class="t" style="left:1072.5px;top:782px;font-size:8px;color:#e2e2e2;">7</div>
<div class="t" style="left:1202.0px;top:782px;font-size:8px;color:#e2e2e2;">8</div>
<div class="t" style="left:1331.4px;top:782px;font-size:8px;color:#8c8c8c;">9</div>
<div class="t" style="left:34.1px;top:792px;font-size:8px;color:#7c7e86;">-12</div>
<div class="t" style="left:66.4px;top:792px;font-size:8px;color:#7c7e86;">-9</div>
<div class="t" style="left:98.8px;top:792px;font-size:8px;color:#7c7e86;">-6</div>
<div class="t" style="left:131.1px;top:792px;font-size:8px;color:#7c7e86;">-3</div>
<div class="t" style="left:34.1px;top:782px;font-size:8px;color:#7c7e86;">-1</div>
<div class="t" style="left:1244px;top:770px;font-size:8px;color:#d8d8d8;">1</div>
<div class="t" style="left:1270px;top:770px;font-size:8px;color:#d8d8d8;">/</div>
<div class="t" style="left:1294.5px;top:770px;font-size:8px;color:#d8d8d8;">1</div>
<div class="t" style="left:1320.5px;top:770px;font-size:8px;color:#d8d8d8;">/</div>
<div class="t" style="left:1340.5px;top:770px;font-size:8px;color:#d8d8d8;letter-spacing:0.58px;">103</div>
<div style="left:4px;top:781px;width:11.5px;height:19px;background:#5a5a5a;border:1px solid #7a7a7a;"></div>
<svg style="left:4px;top:781px;" width="12" height="19" viewBox="0 0 12 19"><g fill="none" stroke="#8c8c8c" stroke-width="1.100"><path d="M3 8 L6 5 L9 8"/><path d="M3 11.500 L6 14.500 L9 11.500"/></g></svg>
<svg style="left:6px;top:807px;" width="12" height="8" viewBox="0 0 12 8"><path d="M0.500 4 Q6 -1.500 11.500 4 Q6 9.500 0.500 4Z" fill="#c8c8c8"/><circle cx="6" cy="4" r="2" fill="#505050"/><circle cx="6" cy="4" r="1" fill="#c8c8c8"/></svg>
<svg style="left:6px;top:904px;" width="12" height="8" viewBox="0 0 12 8"><path d="M0.500 4 Q6 -1.500 11.500 4 Q6 9.500 0.500 4Z" fill="#c8c8c8"/><circle cx="6" cy="4" r="2" fill="#505050"/><circle cx="6" cy="4" r="1" fill="#c8c8c8"/></svg>
<div style="left:4px;top:1023.5px;width:1365px;height:10px;background:#404040;"></div>
<div style="left:18px;top:1024.5px;width:9px;height:8px;background:#565656;"></div>
<svg style="left:18px;top:1024.5px;" width="9" height="8" viewBox="0 0 9 8"><path d="M5.500 1.500 L3 4 L5.500 6.500" fill="none" stroke="#999" stroke-width="1.100"/></svg>
<div style="left:1350px;top:1024.5px;width:9px;height:8px;background:#565656;"></div>
<svg style="left:1350px;top:1024.5px;" width="9" height="8" viewBox="0 0 9 8"><path d="M3.500 1.500 L6 4 L3.500 6.500" fill="none" stroke="#999" stroke-width="1.100"/></svg>
<div style="left:30px;top:1025px;width:1202px;height:6px;background:#565656;border-radius:3px;"></div>
<div style="left:0px;top:1033.5px;width:1373px;height:3.5px;background:#2a2a2a;"></div>
<svg style="left:0;top:0" width="400" height="1037" viewBox="0 0 400 1037"><rect x="6.5" y="768.5" width="9" height="9" rx="0.8" fill="none" stroke="#585858" stroke-width="1"/><rect x="27.5" y="768.5" width="10" height="9" rx="0.8" fill="none" stroke="#b8b8b8" stroke-width="1"/><path d="M30 768.500V777.500 M32.500 771.500H35 M32.500 774.500H35" fill="none" stroke="#b8b8b8" stroke-width="1"/><rect x="41.5" y="768.5" width="9" height="9" rx="0.8" fill="none" stroke="#b8b8b8" stroke-width="1"/><path d="M44 768.500V777.500 M46 771.500H48.500 M46 774.500H48.500" fill="none" stroke="#b8b8b8" stroke-width="1"/><circle cx="51" cy="777" r="2" fill="#484848" stroke="#b8b8b8" stroke-width="0.900"/><circle cx="67" cy="772" r="3.600" fill="none" stroke="#b8b8b8" stroke-width="1"/><path d="M69.6 774.600 L73 778" fill="none" stroke="#b8b8b8" stroke-width="1.4"/><path d="M65 772H69" fill="none" stroke="#b8b8b8" stroke-width="0.9"/><circle cx="81.5" cy="772" r="3.600" fill="none" stroke="#b8b8b8" stroke-width="1"/><path d="M84.1 774.600 L87.5 778" fill="none" stroke="#b8b8b8" stroke-width="1.4"/><path d="M79.5 772H83.5" fill="none" stroke="#b8b8b8" stroke-width="0.9"/><path d="M81.5 770V774" fill="none" stroke="#b8b8b8" stroke-width="0.9"/><path d="M101.500 769V777" fill="none" stroke="#686868" stroke-width="1"/><path d="M108 768.500 L103 773 L108 777.500Z" fill="#686868" stroke="none" stroke-width="1"/><path d="M121.500 768.500 L116 773 L121.500 777.500Z" fill="#686868" stroke="none" stroke-width="1"/><path d="M128.800 768 L137.200 773 L128.800 778Z" fill="#d2d2d2" stroke="none" stroke-width="1"/><path d="M144 768.500V777.500" fill="none" stroke="#b8b8b8" stroke-width="1"/><path d="M146 768.500 L152 773 L146 777.500Z" fill="#b8b8b8" stroke="none" stroke-width="1"/><path d="M158 768.500 L164 773 L158 777.500Z" fill="#b8b8b8" stroke="none" stroke-width="1"/><path d="M165.500 768.500V777.500" fill="none" stroke="#b8b8b8" stroke-width="1.2"/><rect x="176" y="765.500" width="15.500" height="14.500" fill="#5f6b8c"/><path d="M179.500 772.500 V771.500 Q179.500 769.500 181.500 769.500 H186.500 M185 768 L187 769.500 L185 771 M188 773.500 V774.500 Q188 776.500 186 776.500 H181 M182.500 775 L180.500 776.500 L182.500 778" fill="none" stroke="#8fa4d6" stroke-width="1.1"/><rect x="199.5" y="768.5" width="9.5" height="7.5" rx="0.8" fill="none" stroke="#b8b8b8" stroke-width="1"/><circle cx="209.0" cy="777" r="1.900" fill="#484848" stroke="#b8b8b8" stroke-width="0.900"/><rect x="213.5" y="768.5" width="9.5" height="7.5" rx="0.8" fill="none" stroke="#b8b8b8" stroke-width="1"/><circle cx="223.0" cy="777" r="1.900" fill="#484848" stroke="#b8b8b8" stroke-width="0.900"/><rect x="228.5" y="768.5" width="9.5" height="7.5" rx="0.8" fill="none" stroke="#b8b8b8" stroke-width="1"/><circle cx="238.0" cy="777" r="1.900" fill="#484848" stroke="#b8b8b8" stroke-width="0.900"/><rect x="242.5" y="768.5" width="9.5" height="7.5" rx="0.8" fill="none" stroke="#b8b8b8" stroke-width="1"/><circle cx="252.0" cy="777" r="1.900" fill="#484848" stroke="#b8b8b8" stroke-width="0.900"/><rect x="265.5" y="768.5" width="7" height="7" rx="0.8" fill="#888" stroke="#b8b8b8" stroke-width="1"/><rect x="268" y="771" width="7" height="7" rx="0.8" fill="none" stroke="#b8b8b8" stroke-width="1"/><path d="M287 768.500 L291 776 H295" fill="none" stroke="#686868" stroke-width="1.3"/><path d="M301.500 771.500 L304.500 768.500 L307.500 771.500 M301.500 774.500 L304.500 777.500 L307.500 774.500" fill="none" stroke="#a0a0a0" stroke-width="1"/><circle cx="318.500" cy="773" r="4" fill="none" stroke="#686868" stroke-width="1"/><circle cx="318.500" cy="773" r="1.500" fill="#686868"/><path d="M328.500 777 L330 769 H337.500 L336 777Z" fill="none" stroke="#b8b8b8" stroke-width="1.1"/><path d="M343 777.500 L350 769.500" fill="none" stroke="#686868" stroke-width="1.2"/></svg>
<div style="left:5px;top:741.5px;width:71px;height:8.2px;background:#2c2c2c;border:1px solid #8a8a8a;background:linear-gradient(170deg,#4a4a4a 0%,#4a4a4a 45%,#2a2a2a 55%,#2a2a2a 100%);"></div>
<div style="left:42.5px;top:741px;width:2.2px;height:9.2px;background:#9a9a9a;"></div>
<div class="t" style="left:6.5px;top:742px;font-size:8.8px;color:#e0e0e0;">76.8</div>
<div style="left:120px;top:741.5px;width:71px;height:8.2px;background:#2c2c2c;border:1px solid #8a8a8a;background:linear-gradient(170deg,#2a2a2a 0%,#2a2a2a 45%,#454545 55%,#2c2c2c 100%);"></div>
<div style="left:155px;top:741px;width:2.2px;height:9.2px;background:#9a9a9a;"></div>
<div class="t" style="left:124px;top:742px;font-size:8.8px;color:#e0e0e0;">0.0</div>
<svg style="left:78px;top:741px;" width="170" height="10" viewBox="0 0 170 10"><g fill="none" stroke="#8a8a8a" stroke-width="1.100"><path d="M3 4.500H9" stroke="#6c6c6c"/><path d="M17.500 4.500H24 M20.750 1.300V7.700" stroke="#6c6c6c"/><path d="M118 4.500 a2.800 2.800 0 0 1 5.600 0 V7.500 M116.300 3 L118 5 L120 3.300"/><path d="M137.600 4.500 a2.800 2.800 0 0 0 -5.600 0 V7.500 M139.300 3 L137.600 5 L135.600 3.300"/><circle cx="149.500" cy="4.500" r="3.200"/><path d="M162 1.500 L159 4.500 L162 7.500" stroke="#7a7a7a"/></g><rect x="31.500" y="2" width="5" height="5" fill="#b8b8b8"/><circle cx="149.500" cy="4.500" r="1" fill="#8a8a8a"/></svg>
<div style="left:1373px;top:17px;width:470px;height:1020px;background:#393939;"></div>
<div style="left:1372px;top:17px;width:1.5px;height:1020px;background:#1e1e1e;"></div>
<div style="left:1373px;top:17px;width:470px;height:1px;background:#2c2c2c;"></div>
<svg style="left:1377px;top:20px;" width="230" height="10" viewBox="0 0 230 10"><g fill="none" stroke="#5a5a5a" stroke-width="1.100"><path d="M5 2 L2.500 5 L5 8 M8 2 L5.500 5 L8 8"/><path d="M13.500 1V9 M15.500 1V9" stroke="#6a6a6a"/><path d="M204 2 L206.500 5 L204 8"/><path d="M221 2 L223.500 5 L221 8 M224 2 L226.500 5 L224 8"/></g></svg>
<svg style="left:1607px;top:20px;" width="236" height="10" viewBox="0 0 236 10"><g fill="none" stroke="#5a5a5a" stroke-width="1.100"><path d="M2 1V9 M4 1V9" stroke="#6a6a6a"/><path d="M218 2 L220.500 5 L218 8"/><path d="M229 2 L231.500 5 L229 8 M232 2 L234.500 5 L232 8"/></g></svg>
<div style="left:1387px;top:46px;width:216.5px;height:262px;background:#4d4d4d;"></div>
<svg style="left:1390px;top:38px;" width="8" height="8" viewBox="0 0 8 8"><path d="M0.500 1.500H6.500M0.500 3.800H6.500M0.500 6.100H6.500" stroke="#666" stroke-width="0.900" fill="none"/></svg>
<div style="left:1401px;top:35.7px;width:66px;height:10.3px;background:#4a4a4a;"></div>
<div class="t" style="left:1421.2px;top:39px;font-size:8px;color:#e8e8e8;font-weight:bold;letter-spacing:-0.47px;">Color Wheel</div>
<div style="left:1467px;top:35.7px;width:68.5px;height:10.3px;background:#444444;"></div>
<div class="t" style="left:1487.5px;top:39px;font-size:8px;color:#7c7c7c;font-weight:bold;letter-spacing:-0.47px;">Color History</div>
<svg style="left:1405px;top:36px;" width="12" height="11" viewBox="0 0 12 11"><circle cx="6" cy="5.500" r="4.300" fill="none" stroke="#d0d0d0" stroke-width="0.900"/><rect x="4.300" y="3.800" width="3.400" height="3.400" rx="0.800" fill="#d0d0d0"/></svg>
<svg style="left:1471.5px;top:37px;" width="12" height="9" viewBox="0 0 12 9"><rect x="0.500" y="1" width="10.500" height="7" rx="1" fill="#6a6a6a"/></svg>
<div style="left:1387.6px;top:65.30px;width:216px;height:215.0px;border-radius:50%;background:conic-gradient(from 0deg,#f2f200 0deg,#14e614 60deg,#10ecec 120deg,#1414f0 180deg,#f014f0 240deg,#f01414 300deg,#f2f200 360deg);"></div>
<div style="left:1405.6px;top:83.40px;width:180px;height:178.8px;border-radius:50%;background:#4d4d4d;"></div>
<div style="left:1436px;top:112.5px;width:120px;height:120px;background:linear-gradient(to bottom,rgba(0,0,0,0),#000),linear-gradient(to right,#fff,#f00);"></div>
<svg style="left:1431px;top:160px;" width="10" height="10" viewBox="0 0 10 10"><circle cx="5" cy="5" r="2.600" fill="none" stroke="#222" stroke-width="1.600"/><circle cx="5" cy="5" r="2.600" fill="none" stroke="#eee" stroke-width="0.800"/></svg>
<svg style="left:0;top:0" width="1843" height="400" viewBox="0 0 1843 400"><rect x="1401.3" y="120.3" width="17.200" height="5.200" fill="none" stroke="#3a1a1a" stroke-width="2.400" opacity="0.55" transform="rotate(30 1409.9 122.9)"/><rect x="1401.3" y="120.3" width="17.200" height="5.200" fill="none" stroke="#fff" stroke-width="1.200" transform="rotate(30 1409.9 122.9)"/></svg>
<div style="left:1405.4px;top:270.8px;width:20px;height:19.8px;background:#b8202e;border:1px solid #6a5258;border-radius:2px;"></div>
<div style="left:1387.3px;top:253.9px;width:21.6px;height:22px;background:#969696;border:1.8px solid #a0a6d8;border-radius:3px;box-shadow:0 0 0 0.8px #4d4d4d, inset 0 0 0 0.8px #70748a;"></div>
<div class="ck" style="left:1389px;top:294px;width:35px;height:10px;border:1px solid #777;border-radius:2px;background-size:6px 6px;background-position:0 0,3px 3px;"></div>
<div style="left:1515px;top:297.8px;width:5.6px;height:5.6px;background:#b01818;"></div>
<div class="t" style="left:1522.5px;top:298px;font-size:8px;color:#d8d8d8;">143</div>
<div style="left:1538.7px;top:297.8px;width:5.6px;height:5.6px;background:#18b018;"></div>
<div class="t" style="left:1545.7px;top:298px;font-size:8px;color:#d8d8d8;">143</div>
<div style="left:1562.2px;top:297.8px;width:5.6px;height:5.6px;background:#1818c8;"></div>
<div class="t" style="left:1569.3px;top:298px;font-size:8px;color:#d8d8d8;">143</div>
<svg style="left:1589.4px;top:292.8px;" width="12" height="12" viewBox="0 0 12 12"><circle cx="6" cy="6" r="5" fill="none" stroke="#c8c8c8" stroke-width="0.900"/><path d="M4.600 3.400 L8.300 6 L4.600 8.600Z" fill="none" stroke="#c8c8c8" stroke-width="0.800"/><path d="M2.800 2.800V9.200" stroke="#c8c8c8" stroke-width="0.700"/></svg>
<svg style="left:1390px;top:315px;" width="8" height="8" viewBox="0 0 8 8"><path d="M0.500 1.500H6.500M0.500 3.800H6.500M0.500 6.100H6.500" stroke="#666" stroke-width="0.900" fill="none"/></svg>
<div style="left:1387px;top:324.5px;width:216.5px;height:94px;background:#3f3f3f;"></div>
<div style="left:1387px;top:321.7px;width:216.5px;height:19.3px;background:#4a4a4a;"></div>
<div style="left:1401px;top:312.1px;width:54.3px;height:12.6px;background:#4a4a4a;"></div>
<div class="t" style="left:1421.2px;top:315px;font-size:8px;color:#e8e8e8;font-weight:bold;letter-spacing:-0.44px;">Color Set</div>
<svg style="left:1405px;top:314px;" width="12" height="11" viewBox="0 0 12 11"><rect x="1" y="1" width="9.500" height="9" rx="1" fill="#999"/><path d="M1 4H10.500M1 7H10.500M4 1V10M7 1V10" stroke="#4a4a4a" stroke-width="0.800"/></svg>
<div style="left:1387.5px;top:326px;width:188.5px;height:13.5px;background:#5a5a5a;border:1px solid #6c6c6c;border-radius:2px;"></div>
<div class="t" style="left:1450.5px;top:329px;font-size:8.3px;color:#e0e0e0;letter-spacing:0.11px;">Storyboarding</div>
<svg style="left:1565px;top:327px;" width="40" height="12" viewBox="0 0 40 12"><g fill="none" stroke="#c0c0c0" stroke-width="1"><path d="M3 4.500 L5 2.500 L7 4.500 M3 7.500 L5 9.500 L7 7.500" stroke="#a8a8a8"/><circle cx="16.500" cy="4.300" r="2.400"/><path d="M18.300 6.100 L22.300 10.100" stroke-width="2.200" stroke-linecap="round"/><rect x="28.500" y="2.500" width="8" height="7.500" rx="1"/><path d="M32.500 3.500V8 M30.500 6 L32.500 8 L34.500 6"/></g></svg>
<div style="left:1388.8px;top:341.4px;width:26.0px;height:25.2px;background:#000000;"></div>
<div style="left:1414.6px;top:341.4px;width:26.099999999999998px;height:25.2px;background:#515151;"></div>
<div style="left:1440.5px;top:341.4px;width:26.0px;height:25.2px;background:#909090;"></div>
<div style="left:1466.3px;top:341.4px;width:26.099999999999998px;height:25.2px;background:#d9d9d9;"></div>
<div style="left:1492.2px;top:341.4px;width:26.0px;height:25.2px;background:#ffffff;"></div>
<div style="left:1518.0px;top:341.4px;width:26.099999999999998px;height:25.2px;background:#ff2800;"></div>
<div style="left:1543.9px;top:341.4px;width:26.0px;height:25.2px;background:#c2e2fa;"></div>
<div style="left:1569.8px;top:341.4px;width:26.0px;height:25.2px;background:#2f62f2;"></div>
<div style="left:1440.5px;top:341.4px;width:25.9px;height:25.2px;border:1px solid #ff6a6a;"></div>
<div style="left:1387px;top:418px;width:216.5px;height:15.5px;background:#4a4a4a;"></div>
<div style="left:1389px;top:424.5px;width:5px;height:5px;background:#c01818;"></div>
<div style="left:1411.5px;top:424.5px;width:5px;height:5px;background:#18b018;"></div>
<div style="left:1434.5px;top:424.5px;width:5px;height:5px;background:#1818d0;"></div>
<svg style="left:1562px;top:420px;" width="42" height="12" viewBox="0 0 42 12"><g fill="none" stroke="#c0c0c0" stroke-width="1"><path d="M3.500 3 V10.500 H10.500 V4.500 L8.500 2.500 H5.500 M7 5.500V9 M5.500 7.500 L7 9 L8.500 7.500"/><path d="M21 2 Q17.500 6 17.500 8 a3.500 3.500 0 0 0 7 0 Q24.500 6 21 2Z"/><circle cx="26" cy="9.500" r="1.500" fill="#4a4a4a"/><path d="M31 3.500H39 M32 3.500 L32.500 11 H37.500 L38 3.500 M33.500 2H36.500 M34 5.500V9.500 M36 5.500V9.500"/></g></svg>
<svg style="left:1390px;top:439px;" width="8" height="8" viewBox="0 0 8 8"><path d="M0.500 1.500H6.500M0.500 3.800H6.500M0.500 6.100H6.500" stroke="#666" stroke-width="0.900" fill="none"/></svg>
<div style="left:1401px;top:436.7px;width:41.7px;height:11.5px;background:#4a4a4a;"></div>
<div class="t" style="left:1421px;top:440px;font-size:8px;color:#e8e8e8;font-weight:bold;letter-spacing:-0.66px;">Layer</div>
<div style="left:1443px;top:436.7px;width:74.4px;height:11.5px;background:#444444;"></div>
<div class="t" style="left:1464.4px;top:440px;font-size:8px;color:#7c7c7c;font-weight:bold;letter-spacing:-0.50px;">Layer Property</div>
<svg style="left:1404px;top:437px;" width="14" height="12" viewBox="0 0 14 12"><g fill="none" stroke="#d0d0d0" stroke-width="0.900"><path d="M7 1.500 L12 4 L7 6.500 L2 4Z"/><path d="M2 6.200 L7 8.700 L12 6.200 M2 8.400 L7 10.900 L12 8.400"/></g></svg>
<svg style="left:1447px;top:438px;" width="14" height="10" viewBox="0 0 14 10"><path d="M2 7 Q2 2 7 2 Q12 2 12 7" fill="none" stroke="#6c6c6c" stroke-width="1.200"/></svg>
<div style="left:1387px;top:448px;width:216.5px;height:583.5px;background:#3f3f3f;"></div>
<div style="left:1387px;top:448px;width:216.5px;height:51.5px;background:#4a4a4a;"></div>
<div style="left:1388px;top:450.5px;width:27px;height:14px;background:#5a5a5a;border:1px solid #707070;border-radius:2px;"></div>
<div style="left:1391.5px;top:453.5px;width:10px;height:8px;border:1px solid #bbb;border-radius:1.500px;"></div>
<svg style="left:1405px;top:452px;" width="8" height="12" viewBox="0 0 8 12"><path d="M1.500 4.500 L4 2 L6.500 4.500 M1.500 7.500 L4 10 L6.500 7.500" fill="none" stroke="#aaa" stroke-width="1"/></svg>
<div style="left:1418.3px;top:450.5px;width:77.5px;height:14px;background:#5a5a5a;border:1px solid #707070;border-radius:2px;"></div>
<div class="t" style="left:1439.5px;top:453px;font-size:8.3px;color:#e0e0e0;letter-spacing:-0.05px;">Normal</div>
<svg style="left:1486px;top:452px;" width="8" height="12" viewBox="0 0 8 12"><path d="M1.500 4.500 L4 2 L6.500 4.500 M1.500 7.500 L4 10 L6.500 7.500" fill="none" stroke="#aaa" stroke-width="1"/></svg>
<div class="ck2" style="left:1500.7px;top:453.8px;width:74.5px;height:6px;background-size:5px 5px;background-position:0 0,2.500px 2.500px;"></div>
<div style="left:1500.7px;top:453.8px;width:74.5px;height:6px;background:linear-gradient(to right,rgba(255,255,255,0),rgba(200,200,200,.9));"></div>
<div style="left:1574.6px;top:450px;width:2.2px;height:14px;background:#6c6c6c;border:0.500px solid #8a8a8a;"></div>
<div class="t" style="left:1581px;top:454px;font-size:8.3px;color:#e0e0e0;letter-spacing:-0.67px;">100</div>
<svg style="left:1594px;top:452px;" width="8" height="12" viewBox="0 0 8 12"><path d="M1.500 4.500 L4 2 L6.500 4.500 M1.500 7.500 L4 10 L6.500 7.500" fill="none" stroke="#aaa" stroke-width="1"/></svg>
<svg style="left:0;top:0" width="1843" height="520" viewBox="0 0 1843 520"><rect x="1459" y="468.500" width="6" height="6" rx="0.800" fill="none" stroke="#c0c0c0" stroke-width="0.900"/><rect x="1456.500" y="471" width="6" height="6" rx="0.800" fill="#9a9a9a" stroke="#c0c0c0" stroke-width="0.900"/><path d="M1473.300 477 L1474.300 471.500 H1475.700 L1476.700 477Z" fill="#c0c0c0"/><path d="M1475 470.500 L1471 469 M1475 470.500 L1479 469 M1475 470.500 L1471.500 472.500 M1475 470.500 L1478.500 472.500 M1475 470.500 V468" stroke="#c0c0c0" stroke-width="0.800" fill="none"/><path d="M1486.500 468.500 H1490 V473 L1488 476.500 H1486.500Z" fill="none" stroke="#c0c0c0" stroke-width="0.900"/><path d="M1489.500 474.500 H1493 M1491.500 473 L1493 474.500 L1491.500 476" fill="none" stroke="#c0c0c0" stroke-width="0.800"/><rect x="1500.5" y="472" width="6" height="4.800" rx="0.600" fill="#c0c0c0"/><path d="M1501.8 472 v-1.500 a1.700 1.700 0 0 1 3.400 0 v1.500" fill="none" stroke="#c0c0c0" stroke-width="0.900"/><rect x="1513" y="472" width="6" height="4.800" rx="0.600" fill="#c0c0c0"/><path d="M1514.3 472 v-1.500 a1.700 1.700 0 0 1 3.400 0 v1.500" fill="none" stroke="#c0c0c0" stroke-width="0.900"/><rect x="1519.500" y="469" width="2.200" height="2.200" fill="#c0c0c0"/><rect x="1521.700" y="471.200" width="2.200" height="2.200" fill="#c0c0c0"/><rect x="1519.500" y="473.400" width="2.200" height="2.200" fill="#c0c0c0"/><rect x="1531" y="469" width="7.500" height="7.500" rx="1" fill="none" stroke="#686868" stroke-width="1"/><rect x="1557" y="469" width="7.500" height="7.500" rx="1" fill="none" stroke="#686868" stroke-width="1"/><path d="M1544.5 471.500 L1547 469 L1549.5 471.500 M1544.5 474 L1547 476.500 L1549.5 474" fill="none" stroke="#7a7a7a" stroke-width="1"/><path d="M1570.5 471.500 L1573 469 L1575.5 471.500 M1570.5 474 L1573 476.500 L1575.5 474" fill="none" stroke="#7a7a7a" stroke-width="1"/><path d="M1596.5 471.500 L1599 469 L1601.5 471.500 M1596.5 474 L1599 476.500 L1601.5 474" fill="none" stroke="#7a7a7a" stroke-width="1"/><rect x="1579.500" y="465.500" width="24" height="14" rx="1.500" fill="#585858" stroke="#7c7c7c" stroke-width="0.800"/><rect x="1582" y="468.500" width="6" height="6" fill="#4a90e8"/><rect x="1585" y="471.500" width="6" height="6" fill="#f4f4f4"/><path d="M1595.500 471.500 L1598 469 L1600.500 471.500 M1595.500 474 L1598 476.500 L1600.500 474" fill="none" stroke="#8a8a8a" stroke-width="1"/><rect x="1387.500" y="482" width="14.500" height="15" fill="#5f6b8c"/><rect x="1390.500" y="485" width="9" height="3.800" fill="none" stroke="#9fb0e0" stroke-width="0.900"/><rect x="1390.500" y="490.200" width="9" height="3.800" fill="none" stroke="#9fb0e0" stroke-width="0.900"/><rect x="1492.5" y="485.500" width="8" height="7" rx="1" fill="none" stroke="#c8c8c8" stroke-width="1"/><circle cx="1501" cy="493" r="1.600" fill="#4a4a4a" stroke="#c8c8c8" stroke-width="0.800"/><rect x="1506.5" y="485.500" width="8" height="7" rx="1" fill="none" stroke="#c8c8c8" stroke-width="1"/><circle cx="1515" cy="493" r="1.600" fill="#4a4a4a" stroke="#c8c8c8" stroke-width="0.800"/><rect x="1520.5" y="485.500" width="8" height="7" rx="1" fill="none" stroke="#c8c8c8" stroke-width="1"/><circle cx="1529" cy="493" r="1.600" fill="#4a4a4a" stroke="#c8c8c8" stroke-width="0.800"/><rect x="1535.5" y="485.500" width="8" height="7" rx="1" fill="none" stroke="#686868" stroke-width="1"/><circle cx="1544" cy="493" r="1.600" fill="#4a4a4a" stroke="#686868" stroke-width="0.800"/><rect x="1548.5" y="485.500" width="8" height="7" rx="1" fill="none" stroke="#686868" stroke-width="1"/><circle cx="1557" cy="493" r="1.600" fill="#4a4a4a" stroke="#686868" stroke-width="0.800"/><rect x="1578.5" y="485.500" width="8" height="7" rx="1" fill="none" stroke="#686868" stroke-width="1"/><circle cx="1587" cy="493" r="1.600" fill="#4a4a4a" stroke="#686868" stroke-width="0.800"/><rect x="1521" y="486.500" width="7" height="6" fill="#b0b0b0"/><rect x="1564.500" y="485" width="8.500" height="8.500" rx="1.500" fill="#d0d0d0"/><circle cx="1568.750" cy="489.250" r="2.500" fill="#4a4a4a"/><path d="M1593 486.500H1601 M1594 486.500 L1594.500 494 H1599.500 L1600 486.500 M1595.500 485H1598.500 M1596 488.500V492.500 M1598 488.500V492.500" fill="none" stroke="#c0c0c0" stroke-width="1"/></svg>
<div style="left:1402px;top:499.5px;width:1px;height:94px;background:#333;"></div>
<div style="left:1415px;top:499.5px;width:1px;height:94px;background:#333;"></div>
<div style="left:1424px;top:522.7px;width:172px;height:1px;background:#2e2e2e;"></div>
<div style="left:1387px;top:569.5px;width:209px;height:1px;background:#303030;"></div>
<div style="left:1387px;top:593.2px;width:209px;height:1px;background:#303030;"></div>
<div style="left:1415.7px;top:546.7px;width:180px;height:22.8px;background:#65708f;"></div>
<svg style="left:1388px;top:506.5px;" width="12" height="8" viewBox="0 0 12 8"><path d="M0.500 4 Q6 -1 11.500 4 Q6 9 0.500 4Z" fill="#b4b4b4"/><circle cx="6" cy="4" r="2.100" fill="#3f3f3f"/><circle cx="6" cy="4" r="1.100" fill="#b4b4b4"/></svg>
<svg style="left:1388px;top:529.5px;" width="12" height="8" viewBox="0 0 12 8"><path d="M0.500 4 Q6 -1 11.500 4 Q6 9 0.500 4Z" fill="#b4b4b4"/><circle cx="6" cy="4" r="2.100" fill="#3f3f3f"/><circle cx="6" cy="4" r="1.100" fill="#b4b4b4"/></svg>
<svg style="left:1388px;top:553.5px;" width="12" height="8" viewBox="0 0 12 8"><path d="M0.500 4 Q6 -1 11.500 4 Q6 9 0.500 4Z" fill="#b4b4b4"/><circle cx="6" cy="4" r="2.100" fill="#3f3f3f"/><circle cx="6" cy="4" r="1.100" fill="#b4b4b4"/></svg>
<svg style="left:1388px;top:577.5px;" width="12" height="8" viewBox="0 0 12 8"><path d="M0.500 4 Q6 -1 11.500 4 Q6 9 0.500 4Z" fill="#b4b4b4"/><circle cx="6" cy="4" r="2.100" fill="#3f3f3f"/><circle cx="6" cy="4" r="1.100" fill="#b4b4b4"/></svg>
<div style="left:1405.5px;top:507px;width:7px;height:7px;border:1px solid #484848;border-radius:1px;"></div>
<div style="left:1405.5px;top:530px;width:7px;height:7px;border:1px solid #484848;border-radius:1px;"></div>
<div style="left:1405.5px;top:578px;width:7px;height:7px;border:1px solid #484848;border-radius:1px;"></div>
<svg style="left:1404px;top:552px;" width="12" height="11" viewBox="0 0 12 11"><path d="M1.500 9.500 L3 6.500 L9 1 L10.500 2.500 L4.500 8.500Z" fill="#c8c8c8"/><path d="M1 10.500H11" stroke="#c8c8c8" stroke-width="0.900"/></svg>
<svg style="left:1416px;top:508px;" width="10" height="8" viewBox="0 0 10 8"><path d="M1.500 2 L4.500 5 L7.500 2" fill="none" stroke="#c0c0c0" stroke-width="1.200"/></svg>
<svg style="left:1427px;top:532px;" width="10" height="8" viewBox="0 0 10 8"><path d="M1.500 2 L4.500 5 L7.500 2" fill="none" stroke="#c0c0c0" stroke-width="1.200"/></svg>
<svg style="left:1427px;top:504px;" width="14" height="13" viewBox="0 0 14 13"><g fill="none" stroke="#c8c8c8" stroke-width="1"><path d="M1.500 11 V4 H4.500 L5.500 2.500 H12 V11Z"/></g><rect x="4" y="5.500" width="7" height="4" fill="#c8c8c8"/></svg>
<svg style="left:1471px;top:525px;" width="14" height="12" viewBox="0 0 14 12"><g fill="none" stroke="#c8c8c8" stroke-width="1"><path d="M1.500 10 V2.500 H5 L6 4 H11 V5.500 M1.500 10 L3.500 5.500 H13 L11 10Z"/></g></svg>
<div class="t" style="left:1447px;top:502px;font-size:8.3px;color:#e4e4e4;letter-spacing:-0.05px;">100 % Normal</div>
<div class="t" style="left:1447px;top:511px;font-size:8.3px;color:#e4e4e4;letter-spacing:0.08px;">Animation folder : 1</div>
<div class="ck2" style="left:1438.8px;top:526.4px;width:23.7px;height:15.2px;border:1px solid #2a2a2a;background-size:5px 5px;background-position:0 0,2.500px 2.500px;"></div>
<div class="t" style="left:1487px;top:525px;font-size:8.3px;color:#e4e4e4;letter-spacing:-0.05px;">100 % Normal</div>
<div class="t" style="left:1487px;top:535px;font-size:8.3px;color:#e4e4e4;">1</div>
<div style="left:1446.5px;top:547.5px;width:28px;height:21.5px;background:#2a2a2a;border:1px solid #b8c0d8;"></div>
<div class="ck2" style="left:1449px;top:551px;width:23px;height:14.5px;background-size:5px 5px;background-position:0 0,2.500px 2.500px;"></div>
<div class="t" style="left:1479px;top:549px;font-size:8.3px;color:#f0f0f0;letter-spacing:-0.05px;">100 % Normal</div>
<div class="t" style="left:1479px;top:559px;font-size:8.3px;color:#f0f0f0;letter-spacing:0.09px;">sketch box</div>
<div style="left:1420px;top:573.3px;width:23.7px;height:16.8px;background:#ffffff;"></div>
<svg style="left:1453px;top:574px;" width="12" height="12" viewBox="0 0 12 12"><rect x="0.500" y="0.500" width="10.500" height="10.500" rx="1" fill="#fff"/><path d="M3.500 2.500 H7.500 V8.500 H3.500Z M7.500 6.500 L5.500 8.500" fill="none" stroke="#333" stroke-width="0.900"/></svg>
<div class="t" style="left:1468px;top:582px;font-size:8.3px;color:#e4e4e4;letter-spacing:-0.29px;">Paper</div>
<div class="t" style="left:1490px;top:1026px;font-size:6px;color:#7a7a7a;">.....</div>
<div style="left:1373px;top:1033.5px;width:470px;height:3.5px;background:#2a2a2a;"></div>
<div style="left:1603.5px;top:17px;width:3px;height:1020px;background:#383838;"></div>
<div style="left:1605px;top:17px;width:1px;height:1020px;background:#2a2a2a;"></div>
<div style="left:1607px;top:34.5px;width:236px;height:14px;background:#3a3a3a;"></div>
<svg style="left:1610px;top:38px;" width="8" height="8" viewBox="0 0 8 8"><path d="M0.500 1.500H6.500M0.500 3.800H6.500M0.500 6.100H6.500" stroke="#666" stroke-width="0.900" fill="none"/></svg>
<div style="left:1620px;top:35.6px;width:56px;height:12.5px;background:#4a4a4a;"></div>
<div class="t" style="left:1640px;top:39px;font-size:8px;color:#e8e8e8;font-weight:bold;letter-spacing:-0.42px;">Navigator</div>
<div style="left:1676px;top:35.6px;width:64.5px;height:12.5px;background:#444444;"></div>
<div class="t" style="left:1697.8px;top:39px;font-size:8px;color:#7c7c7c;font-weight:bold;letter-spacing:-0.50px;">Auto Action</div>
<svg style="left:1624px;top:36px;" width="12" height="11" viewBox="0 0 12 11"><rect x="1.500" y="1.500" width="9" height="8.500" rx="1" fill="none" stroke="#c8c8c8" stroke-width="0.900"/><rect x="3.500" y="3.500" width="5" height="4.500" fill="#999"/></svg>
<svg style="left:1683px;top:37px;" width="13" height="9" viewBox="0 0 13 9"><path d="M1 7 L1.500 3.500 L9 1.500 L9.500 3 M2.500 7.500V5 M5 7.500V5 M7.500 7.500V5" fill="none" stroke="#6c6c6c" stroke-width="1"/></svg>
<div style="left:1607px;top:46.6px;width:236px;height:2px;background:#454545;"></div>
<div style="left:1607px;top:48.4px;width:236px;height:184px;background:#2f2f2f;"></div>
<div style="left:1607px;top:69.5px;width:236px;height:142.5px;background:#c8202a;"></div>
<div style="left:1607px;top:71.4px;width:236px;height:138.4px;background:#ffffff;"></div>
<div style="left:1607px;top:209.8px;width:236px;height:4px;background:#5e2027;"></div>
<svg style="left:1713px;top:157px;" width="32" height="32" viewBox="0 0 32 32"><g transform="translate(0.67,-0.18) scale(0.95)" fill="none" stroke="#8f8f8f" stroke-width="1.900" stroke-linejoin="round" stroke-linecap="round"><path d="M1.500 6.500 Q8 3.500 13 2 L29 6.500 Q22 10 16.500 15 Q9 10.500 1.500 6.500Z"/><path d="M1.800 7 L3 21.500 Q10 26.500 17.500 30 Q16 22 16.500 15"/><path d="M29 6.500 Q30.500 15 30 23 L17.500 30"/></g></svg>
<div style="left:1607px;top:232px;width:236px;height:31px;background:#4a4a4a;"></div>
<div style="left:1610px;top:237px;width:124px;height:8.4px;background:#2a2a2a;border:1px solid #7c7c7c;background:linear-gradient(176deg,#4c4c4c 0%,#4c4c4c 42%,#262626 58%,#262626 100%);"></div>
<div style="left:1676.6999999999998px;top:233.8px;width:2.8px;height:14.6px;background:#6a6a6a;border:0.800px solid #a8a8a8;border-radius:1px;"></div>
<div style="left:1610px;top:251.4px;width:124px;height:8.4px;background:#2a2a2a;border:1px solid #7c7c7c;background:linear-gradient(176deg,#2a2a2a 0%,#2a2a2a 35%,#4a4a4a 50%,#282828 65%,#282828 100%);"></div>
<div style="left:1670.8999999999999px;top:248.20000000000002px;width:2.8px;height:14.6px;background:#6a6a6a;border:0.800px solid #a8a8a8;border-radius:1px;"></div>
<div class="t" style="left:1750.5px;top:237px;font-size:8.3px;color:#e0e0e0;letter-spacing:0.12px;">76.8</div>
<div class="t" style="left:1755.5px;top:252px;font-size:8.3px;color:#e0e0e0;letter-spacing:-0.02px;">0.0</div>
<svg style="left:0;top:0" width="1843" height="270" viewBox="0 0 1843 270"><circle cx="1775" cy="241.500" r="4.500" fill="none" stroke="#c8c8c8" stroke-width="0.900"/><circle cx="1789" cy="241.500" r="4.500" fill="none" stroke="#c8c8c8" stroke-width="0.900"/><circle cx="1803.5" cy="241.500" r="4.500" fill="none" stroke="#c8c8c8" stroke-width="0.900"/><path d="M1772.500 241.500H1777.500 M1786.500 241.500H1791.500 M1789 239V244" stroke="#c8c8c8" stroke-width="0.900"/><rect x="1801.500" y="239.500" width="4" height="4" fill="#c8c8c8"/><rect x="1813" y="234.500" width="14" height="14" fill="#5f6b8c"/><rect x="1816" y="237.500" width="4.500" height="3.500" fill="none" stroke="#a8bcf0" stroke-width="0.900"/><rect x="1820" y="242" width="4.500" height="3.500" fill="none" stroke="#a8bcf0" stroke-width="0.900"/><rect x="1831.500" y="237.500" width="7.500" height="7.500" fill="none" stroke="#c8c8c8" stroke-width="0.900"/><path d="M1833 239 L1837.500 243.500" stroke="#c8c8c8" stroke-width="0.900"/><path d="M1771.500 257 a3.800 3.800 0 1 1 1.500 2.500 M1771 254 L1771.500 257.300 L1774.500 256.500" fill="none" stroke="#c8c8c8" stroke-width="0.900"/><path d="M1792.500 257 a3.800 3.800 0 1 0 -1.500 2.500 M1793 254 L1792.500 257.300 L1789.500 256.500" fill="none" stroke="#c8c8c8" stroke-width="0.900"/><circle cx="1803.500" cy="256" r="4.300" fill="none" stroke="#c8c8c8" stroke-width="0.900"/><path d="M1803.500 252V256" stroke="#c8c8c8" stroke-width="0.900"/><circle cx="1803.500" cy="256.500" r="1.200" fill="#c8c8c8"/><path d="M1814.500 252.500 L1818.500 256 L1814.500 259.500Z" fill="none" stroke="#c8c8c8" stroke-width="0.900"/><path d="M1825.500 252.500 L1821.500 256 L1825.500 259.500Z" fill="#c8c8c8"/><path d="M1820 251.500V260.500" stroke="#c8c8c8" stroke-width="0.800"/><path d="M1831.500 251 L1835 254.500 L1838.500 251Z" fill="none" stroke="#c8c8c8" stroke-width="0.900"/><path d="M1831.500 261 L1835 257.500 L1838.500 261Z" fill="#c8c8c8"/><path d="M1830.500 256H1839.500" stroke="#c8c8c8" stroke-width="0.800"/></svg>
<div style="left:1607px;top:263px;width:236px;height:16px;background:#3a3a3a;"></div>
<svg style="left:1610px;top:269px;" width="8" height="8" viewBox="0 0 8 8"><path d="M0.500 1.500H6.500M0.500 3.800H6.500M0.500 6.100H6.500" stroke="#666" stroke-width="0.900" fill="none"/></svg>
<div style="left:1620px;top:266.5px;width:36.5px;height:12px;background:#4a4a4a;"></div>
<div class="t" style="left:1640.4px;top:270px;font-size:8px;color:#e8e8e8;font-weight:bold;letter-spacing:-0.76px;">Tool</div>
<svg style="left:1623px;top:267px;" width="12" height="11" viewBox="0 0 12 11"><path d="M2 9.500 L8.500 2 L10 3.500 L3.500 10.500Z" fill="#c8c8c8"/></svg>
<div style="left:1607px;top:278px;width:236px;height:82px;background:#3c3c3c;"></div>
<div style="left:1607px;top:359.7px;width:236px;height:36px;background:#4b4b4b;"></div>
<div style="left:1607px;top:276.2px;width:236px;height:3.6px;background:#474747;"></div>
<div style="left:1609px;top:299.4px;width:232px;height:1.2px;background:#4e4e4e;"></div>
<div style="left:1609px;top:320px;width:232px;height:1.2px;background:#4e4e4e;"></div>
<div style="left:1609px;top:340px;width:232px;height:1.2px;background:#4e4e4e;"></div>
<div style="left:1610px;top:282.5px;width:15.3px;height:15.3px;background:#f28a90;border-radius:2px;background:repeating-linear-gradient(45deg,rgba(200,40,50,0) 0,rgba(200,40,50,0) 2px,rgba(190,40,50,.5) 2px,rgba(190,40,50,.5) 2.800px),repeating-linear-gradient(-45deg,rgba(200,40,50,0) 0,rgba(200,40,50,0) 2px,rgba(190,40,50,.5) 2px,rgba(190,40,50,.5) 2.800px),#f48a92;"></div>
<div style="left:1629.5px;top:282.5px;width:15.5px;height:15px;background:#a02a8c;border-radius:2px;"></div>
<svg style="left:1629.5px;top:282.5px;" width="16" height="15" viewBox="0 0 16 15"><path d="M3 11 L8.500 4.500 L10 3.200 L12.500 5.500 L11.500 7 L5.500 13Z" fill="#ecd8ec"/><path d="M4.800 10.500 L7 8.200 L8.800 10 L6.500 12.200Z" fill="#8a2a7c"/></svg>
<svg style="left:1649px;top:284px;" width="16" height="12" viewBox="0 0 16 12"><path d="M1.500 2H14.500 M1.500 5H14.500 M1.500 8H14.500 M1.500 11H14.500" stroke="#b8b8b8" stroke-width="1"/></svg>
<div style="left:1629.5px;top:302.5px;width:15.5px;height:15.5px;background:#f0e48a;border-radius:1.500px;"></div>
<div style="left:1649px;top:343px;width:15.5px;height:15.5px;background:#65708f;"></div>
<svg style="left:1610px;top:303.2px;" width="14" height="14" viewBox="0 0 14 14"><path d="M6 3 L9 1.500 L12.500 5 L9.500 8.500Z" fill="#d8d8d8" stroke="#cfcfcf" stroke-width="0.6" stroke-linejoin="round"/></svg>
<svg style="left:1610px;top:303.2px;" width="14" height="14" viewBox="0 0 14 14"><path d="M6 3 L9.500 8.500 L6.500 11 L2.500 7.500Z M1.500 12.500 H11" fill="none" stroke="#cfcfcf" stroke-width="0.9" stroke-linejoin="round"/></svg>
<svg style="left:1630px;top:303.2px;" width="14" height="14" viewBox="0 0 14 14"><path d="M2.500 12.500 L4.500 7 L8.500 3.500 L11 6 L7.500 10Z M2.500 12.500 L6 8.500" fill="none" stroke="#4a3c10" stroke-width="1" stroke-linejoin="round"/></svg>
<svg style="left:1630px;top:303.2px;" width="14" height="14" viewBox="0 0 14 14"><path d="M8.500 3.500 L10.500 1.800 L12.800 4 L11 6Z" fill="#3a3020" stroke="#3a3020" stroke-width="0.6" stroke-linejoin="round"/></svg>
<svg style="left:1649px;top:303.2px;" width="14" height="14" viewBox="0 0 14 14"><path d="M2.500 12.500 L4 8 L8 3.500 L11 6.500 L7 10.500Z" fill="none" stroke="#cfcfcf" stroke-width="0.9" stroke-linejoin="round"/></svg>
<svg style="left:1649px;top:303.2px;" width="14" height="14" viewBox="0 0 14 14"><path d="M8 3.500 L9.800 1.500 L12.800 4.500 L11 6.500Z" fill="#c8c8c8" stroke="#cfcfcf" stroke-width="0.6" stroke-linejoin="round"/></svg>
<svg style="left:1668px;top:303.2px;" width="14" height="14" viewBox="0 0 14 14"><path d="M2.500 12.500 Q3.500 8.500 6 7.500 L8 9.500 Q7 12 2.500 12.500Z" fill="none" stroke="#cfcfcf" stroke-width="0.9" stroke-linejoin="round"/></svg>
<svg style="left:1668px;top:303.2px;" width="14" height="14" viewBox="0 0 14 14"><path d="M6.500 6.800 L10 2 Q12 1.500 12.500 3.500 L8.700 8.800Z" fill="#c8c8c8" stroke="#cfcfcf" stroke-width="0.6" stroke-linejoin="round"/></svg>
<svg style="left:1610px;top:323.2px;" width="14" height="14" viewBox="0 0 14 14"><path d="M2.500 8 L7.500 3 L12.500 8 L7.500 13Z" fill="#cfcfcf" stroke="#cfcfcf" stroke-width="0.6" stroke-linejoin="round"/></svg>
<svg style="left:1610px;top:323.2px;" width="14" height="14" viewBox="0 0 14 14"><path d="M7.500 3 L4.500 1.500 Q1.500 4 2.500 9" fill="none" stroke="#cfcfcf" stroke-width="1" stroke-linejoin="round"/></svg>
<svg style="left:1630px;top:323.2px;" width="14" height="14" viewBox="0 0 14 14"><ellipse cx="7" cy="6.500" rx="5.500" ry="4.500" fill="#8a8a8a" stroke="#cfcfcf" stroke-width="0.900"/><path d="M2 12.500 Q5 10.500 7 12" fill="none" stroke="#cfcfcf" stroke-width="0.900"/></svg>
<div style="left:1650.3px;top:324.5px;width:11.6px;height:11.6px;border:0.800px solid #cfcfcf;background:linear-gradient(135deg,#eeeeee,#555555);"></div>
<svg style="left:1668px;top:323.2px;" width="14" height="14" viewBox="0 0 14 14"><circle cx="6" cy="6" r="4.200" fill="none" stroke="#cfcfcf" stroke-width="1"/><path d="M9 9 L12.500 12.500" stroke="#cfcfcf" stroke-width="1.400"/></svg>
<svg style="left:1688px;top:323.2px;" width="14" height="14" viewBox="0 0 14 14"><rect x="1.500" y="2" width="11" height="10" fill="none" stroke="#cfcfcf" stroke-width="1" stroke-dasharray="1.500 1.200"/></svg>
<svg style="left:1707px;top:323.2px;" width="14" height="14" viewBox="0 0 14 14"><path d="M2 12.500 L3.500 9 L8 4.500 L9.800 6.300 L5.300 11Z" fill="#cfcfcf" stroke="#cfcfcf" stroke-width="0.6" stroke-linejoin="round"/></svg>
<svg style="left:1707px;top:323.2px;" width="14" height="14" viewBox="0 0 14 14"><path d="M7.800 3.200 L11 6.400 M9 4.500 L11 2 Q12.500 1.500 12.300 3.300 L10 5.500" fill="none" stroke="#cfcfcf" stroke-width="1.2" stroke-linejoin="round"/></svg>
<svg style="left:1726.5px;top:323.2px;" width="14" height="14" viewBox="0 0 14 14"><circle cx="7" cy="7" r="5" fill="none" stroke="#cfcfcf" stroke-width="1" stroke-dasharray="1.600 1.300"/><path d="M9.500 6 L12.500 7 L10.500 9.500Z" fill="#cfcfcf"/></svg>
<svg style="left:1746px;top:323.2px;" width="14" height="14" viewBox="0 0 14 14"><path d="M7 1.500V12.500 M1.500 7H12.500 M5.500 3 L7 1.500 L8.500 3 M5.500 11 L7 12.500 L8.500 11 M3 5.500 L1.500 7 L3 8.500 M11 5.500 L12.500 7 L11 8.500" fill="none" stroke="#cfcfcf" stroke-width="1.0" stroke-linejoin="round"/></svg>
<svg style="left:1765px;top:323.2px;" width="14" height="14" viewBox="0 0 14 14"><path d="M2.500 12.500 L8 7 M9.500 2V4.500 M9.500 7V9 M6.500 5.500H8.500 M10.500 5.500H13 M7.500 3.500 L8.500 4.500 M11.500 3.500 L10.500 4.500 M11.500 7.500 L10.500 6.500" fill="none" stroke="#cfcfcf" stroke-width="1.1" stroke-linejoin="round"/></svg>
<svg style="left:1610px;top:343.8px;" width="14" height="14" viewBox="0 0 14 14"><path d="M3 12.500V9 H11V12.500Z M5.500 9 V6.500 a1.500 1.500 0 0 1 3 0V9 M2 2.500H5 M2 4.500H4" fill="none" stroke="#cfcfcf" stroke-width="1.0" stroke-linejoin="round"/></svg>
<svg style="left:1630px;top:343.8px;" width="14" height="14" viewBox="0 0 14 14"><path d="M2 4 L12 2.500 V10.500 L2 12Z M1 8 L13 6" fill="none" stroke="#cfcfcf" stroke-width="1.0" stroke-linejoin="round"/></svg>
<svg style="left:1649px;top:343.8px;" width="14" height="14" viewBox="0 0 14 14"><path d="M2.500 12 L12 2.500 V12Z M5.500 10.500 L10.500 5.500 V10.500Z" fill="none" stroke="#e4e4e4" stroke-width="1.0" stroke-linejoin="round"/></svg>
<svg style="left:1668px;top:343.8px;" width="14" height="14" viewBox="0 0 14 14"><path d="M2 4 L6 2 L10 4 V9 L6 11 L2 9Z M2 4 L6 6 L10 4 M6 6V11 M9 8 L12.500 12.500 L10.500 12 L9.500 13.500Z" fill="none" stroke="#cfcfcf" stroke-width="1.0" stroke-linejoin="round"/></svg>
<div class="t" style="left:1689px;top:344px;font-size:15px;color:#cfcfcf;">A</div>
<svg style="left:1707px;top:343.8px;" width="14" height="14" viewBox="0 0 14 14"><path d="M4.500 2 Q1 7 2 10 Q4 13 7 10.500 Q10 13 12 10 Q13 7 9.500 2 Q8 5 7 5 Q6 5 4.500 2Z" fill="#888" stroke="#aaa" stroke-width="0.800"/></svg>
<svg style="left:1726px;top:343.8px;" width="14" height="14" viewBox="0 0 14 14"><path d="M2 2H12V12H2Z M5.500 2V12 M8.500 2V12 M2 5.500H12 M2 8.500H12" fill="none" stroke="#cfcfcf" stroke-width="0.9" stroke-linejoin="round"/></svg>
<svg style="left:1746px;top:343.8px;" width="14" height="14" viewBox="0 0 14 14"><ellipse cx="7" cy="6" rx="5.500" ry="4" fill="none" stroke="#cfcfcf" stroke-width="1"/><path d="M3.500 9 L2.500 12.500 L6 10" fill="none" stroke="#cfcfcf" stroke-width="1"/></svg>
<svg style="left:1765px;top:343.8px;" width="14" height="14" viewBox="0 0 14 14"><path d="M4 3.500 L11 8 L7.500 8.500 L6 12Z M2 2.500 a1.500 1.500 0 1 0 0.100 0 M5 2.500H10" fill="#cfcfcf" stroke="#cfcfcf" stroke-width="0.8" stroke-linejoin="round"/></svg>
<svg style="left:1784px;top:344.8px;" width="16" height="12" viewBox="0 0 16 12"><path d="M1.500 2H14.500 M1.500 5H14.500 M1.500 8H14.500 M1.500 11H14.500" stroke="#b8b8b8" stroke-width="1"/></svg>
<div style="left:1607px;top:360.4px;width:75.5px;height:20.7px;background:#929292;border:1.500px solid #9098d8;border-radius:2.500px;box-shadow:inset 0 0 0 1px #55586a;"></div>
<div style="left:1686.3px;top:361.09999999999997px;width:75.7px;height:19.3px;background:#b0202c;border:1.300px solid #5c4a4c;border-radius:2px;"></div>
<div class="ck" style="left:1766.5px;top:361.09999999999997px;width:74.3px;height:19.3px;border:1.300px solid #5a5a5a;border-radius:2px;background-size:6.600px 6.600px;background-position:0 0,3.300px 3.300px;"></div>
<div style="left:1607px;top:395.6px;width:236px;height:14px;background:#393939;"></div>
<div style="left:1607px;top:409px;width:236px;height:99.6px;background:#4b4b4b;"></div>
<svg style="left:1610px;top:401.5px;" width="8" height="8" viewBox="0 0 8 8"><path d="M0.500 1.500H6.500M0.500 3.800H6.500M0.500 6.100H6.500" stroke="#666" stroke-width="0.900" fill="none"/></svg>
<div style="left:1620px;top:399.5px;width:62.3px;height:10px;background:#4a4a4a;"></div>
<div class="t" style="left:1640.2px;top:402px;font-size:8px;color:#e8e8e8;font-weight:bold;letter-spacing:-0.50px;">Color Slider</div>
<svg style="left:1624px;top:401px;" width="12" height="10" viewBox="0 0 12 10"><path d="M1.500 2H10.500 M1.500 5H10.500 M1.500 8H10.500" stroke="#c8c8c8" stroke-width="1" fill="none"/><path d="M4 1V3 M8 4V6 M5.500 7V9" stroke="#c8c8c8" stroke-width="1.400"/></svg>
<div style="left:1607px;top:414px;width:12.5px;height:58px;background:#444;border:1px solid #565656;"></div>
<div class="t" style="left:1609.500px;top:431.5px;font-size:7.500px;color:#707070;transform-origin:0 0;transform:rotate(-90deg);width:17px;overflow:hidden;">RGB</div>
<div class="t" style="left:1609.500px;top:452px;font-size:7.500px;color:#e0e0e0;transform-origin:0 0;transform:rotate(-90deg);width:17px;overflow:hidden;">HSV</div>
<div class="t" style="left:1609.500px;top:471.5px;font-size:7.500px;color:#707070;transform-origin:0 0;transform:rotate(-90deg);width:17px;overflow:hidden;">CMYK</div>
<div class="t" style="left:1621px;top:423px;font-size:8.3px;color:#e0e0e0;">H</div>
<div class="t" style="left:1621px;top:441px;font-size:8.3px;color:#e0e0e0;">S</div>
<div class="t" style="left:1621px;top:459px;font-size:8.3px;color:#e0e0e0;">V</div>
<div style="left:1633.4px;top:423px;width:168px;height:6.3px;background:linear-gradient(to right,#f00 0%,#ff0 16.660%,#0f0 33.330%,#0ff 50%,#00f 66.660%,#f0f 83.330%,#f00 100%);"></div>
<div style="left:1633.4px;top:441px;width:168px;height:6.3px;background:linear-gradient(to right,#8f8f8f,#8f0000);"></div>
<div style="left:1633.4px;top:459.3px;width:168px;height:5.7px;background:linear-gradient(to right,#000,#fff);"></div>
<svg style="left:1630.4px;top:430.5px;" width="6" height="4" viewBox="0 0 6 4"><path d="M0.500 3.500 L3 0.800 L5.500 3.500" fill="none" stroke="#8a8a8a" stroke-width="1"/></svg>
<svg style="left:1630.4px;top:448.5px;" width="6" height="4" viewBox="0 0 6 4"><path d="M0.500 3.500 L3 0.800 L5.500 3.500" fill="none" stroke="#8a8a8a" stroke-width="1"/></svg>
<svg style="left:1724.5px;top:466px;" width="6" height="4" viewBox="0 0 6 4"><path d="M0.500 3.500 L3 0.800 L5.500 3.500" fill="none" stroke="#8a8a8a" stroke-width="1"/></svg>
<div class="t" style="left:1817.4px;top:423px;font-size:8.3px;color:#e0e0e0;">0</div>
<div class="t" style="left:1817.5px;top:441px;font-size:8.3px;color:#e0e0e0;letter-spacing:-0.50px;">0%</div>
<div class="t" style="left:1812.5px;top:459px;font-size:8.3px;color:#e0e0e0;letter-spacing:-0.06px;">56%</div>
<svg style="left:1830px;top:420.5px;" width="8" height="12" viewBox="0 0 8 12"><path d="M1.500 4.500 L4 2 L6.500 4.500 M1.500 7.500 L4 10 L6.500 7.500" fill="none" stroke="#8a8a8a" stroke-width="1"/></svg>
<svg style="left:1830px;top:438.5px;" width="8" height="12" viewBox="0 0 8 12"><path d="M1.500 4.500 L4 2 L6.500 4.500 M1.500 7.500 L4 10 L6.500 7.500" fill="none" stroke="#8a8a8a" stroke-width="1"/></svg>
<svg style="left:1830px;top:456.5px;" width="8" height="12" viewBox="0 0 8 12"><path d="M1.500 4.500 L4 2 L6.500 4.500 M1.500 7.500 L4 10 L6.500 7.500" fill="none" stroke="#8a8a8a" stroke-width="1"/></svg>
<div style="left:1607px;top:476px;width:75.5px;height:17.3px;background:#929292;border:1.500px solid #9098d8;border-radius:2.500px;box-shadow:inset 0 0 0 1px #55586a;"></div>
<div style="left:1686.3px;top:476.7px;width:75.7px;height:15.9px;background:#b0202c;border:1.300px solid #5c4a4c;border-radius:2px;"></div>
<div class="ck" style="left:1766.5px;top:476.7px;width:74.3px;height:15.9px;border:1.300px solid #5a5a5a;border-radius:2px;background-size:6.600px 6.600px;background-position:0 0,3.300px 3.300px;"></div>
<div style="left:1607px;top:508.5px;width:236px;height:18.5px;background:#3a3a3a;"></div>
<svg style="left:1610px;top:514.5px;" width="8" height="8" viewBox="0 0 8 8"><path d="M0.500 1.500H6.500M0.500 3.800H6.500M0.500 6.100H6.500" stroke="#666" stroke-width="0.900" fill="none"/></svg>
<div style="left:1620px;top:512.5px;width:73.3px;height:11px;background:#4a4a4a;"></div>
<div class="t" style="left:1640.4px;top:516px;font-size:8px;color:#e8e8e8;font-weight:bold;letter-spacing:-0.64px;">Sub Tool: Ruler</div>
<svg style="left:1624px;top:513px;" width="13" height="11" viewBox="0 0 13 11"><path d="M2 9.500 L9 2 L10.500 3.500 L4 10.500Z" fill="#c8c8c8"/><path d="M1 10.500H12" stroke="#c8c8c8" stroke-width="0.900"/></svg>
<div style="left:1607px;top:523px;width:236px;height:288px;background:#3c3c3c;"></div>
<div style="left:1607px;top:523px;width:236px;height:23px;background:#4a4a4a;"></div>
<div style="left:1607.8px;top:528px;width:105.5px;height:16px;background:#65708f;"></div>
<svg style="left:1609.5px;top:529px;" width="14" height="14" viewBox="0 0 14 14"><path d="M2 2.200 H12.200 L2.700 11.400Z" fill="none" stroke="#d8d8d8" stroke-width="1.700" stroke-linejoin="miter"/></svg>
<div class="t" style="left:1625.8px;top:532px;font-size:8.6px;color:#f0f0f0;letter-spacing:-0.12px;">Create ruler</div>
<div style="left:1833px;top:546px;width:7.5px;height:265px;background:#424242;"></div>
<div style="left:1607px;top:546.4px;width:112px;height:25.600000000000044px;background:#3d3d3d;"></div>
<svg style="left:1610px;top:550.9px;" width="14" height="14" viewBox="0 0 14 14"><path d="M2 2.200 H12.200 L2.700 11.400Z" fill="none" stroke="#d8d8d8" stroke-width="1.700" stroke-linejoin="miter"/></svg>
<div class="t" style="left:1674.2px;top:562px;font-size:8.8px;color:#eeeeee;letter-spacing:-0.14px;">Linear ruler</div>
<div style="left:1719.5px;top:546.4px;width:113.0px;height:25.600000000000044px;background:#3d3d3d;"></div>
<svg style="left:1722.5px;top:550.9px;" width="14" height="14" viewBox="0 0 14 14"><path d="M2 2.200 H12.200 L2.700 11.400Z" fill="none" stroke="#d8d8d8" stroke-width="1.700" stroke-linejoin="miter"/></svg>
<div class="t" style="left:1789.2px;top:562px;font-size:8.8px;color:#eeeeee;letter-spacing:-0.20px;">Curve ruler</div>
<div style="left:1607px;top:572.6px;width:112px;height:25.50000000000002px;background:#3d3d3d;"></div>
<svg style="left:1610px;top:577.1px;" width="14" height="14" viewBox="0 0 14 14"><path d="M2 2.200 H12.200 L2.700 11.400Z" fill="none" stroke="#d8d8d8" stroke-width="1.700" stroke-linejoin="miter"/></svg>
<div class="t" style="left:1674.2px;top:588px;font-size:8.8px;color:#eeeeee;letter-spacing:-0.18px;">Figure ruler</div>
<div style="left:1719.5px;top:572.6px;width:113.0px;height:25.50000000000002px;background:#3d3d3d;"></div>
<svg style="left:1722.5px;top:577.1px;" width="14" height="14" viewBox="0 0 14 14"><path d="M2 2.200 H12.200 L2.700 11.400Z" fill="none" stroke="#d8d8d8" stroke-width="1.700" stroke-linejoin="miter"/></svg>
<div class="t" style="left:1795.2px;top:588px;font-size:8.8px;color:#eeeeee;letter-spacing:-0.33px;">Ruler pen</div>
<div style="left:1607px;top:598.7px;width:112px;height:25.4px;background:#3d3d3d;"></div>
<svg style="left:1610px;top:603.2px;" width="14" height="14" viewBox="0 0 14 14"><path d="M2 2.200 H12.200 L2.700 11.400Z" fill="none" stroke="#d8d8d8" stroke-width="1.700" stroke-linejoin="miter"/></svg>
<div class="t" style="left:1670.2px;top:614px;font-size:8.8px;color:#eeeeee;letter-spacing:-0.16px;">Special ruler</div>
<div style="left:1719.5px;top:598.7px;width:113.0px;height:25.4px;background:#3d3d3d;"></div>
<svg style="left:1722.5px;top:603.2px;" width="14" height="14" viewBox="0 0 14 14"><path d="M2 2.200 H12.200 L2.700 11.400Z" fill="none" stroke="#d8d8d8" stroke-width="1.700" stroke-linejoin="miter"/></svg>
<div class="t" style="left:1809.2px;top:614px;font-size:8.8px;color:#eeeeee;letter-spacing:-0.50px;">Guide</div>
<div style="left:1607px;top:624.7px;width:112px;height:25.499999999999908px;background:#65708f;"></div>
<div style="left:1649.5px;top:637px;width:69.5px;height:13px;background:#5a6480;"></div>
<svg style="left:1610px;top:629.2px;" width="14" height="14" viewBox="0 0 14 14"><path d="M2 2.200 H12.200 L2.700 11.400Z" fill="none" stroke="#d8d8d8" stroke-width="1.700" stroke-linejoin="miter"/></svg>
<div class="t" style="left:1652.7px;top:640px;font-size:8.8px;color:#eeeeee;letter-spacing:-0.10px;">Perspective ruler</div>
<div style="left:1719.5px;top:624.7px;width:113.0px;height:25.499999999999908px;background:#3d3d3d;"></div>
<svg style="left:1722.5px;top:629.2px;" width="14" height="14" viewBox="0 0 14 14"><path d="M2 2.200 H12.200 L2.700 11.400Z" fill="none" stroke="#d8d8d8" stroke-width="1.700" stroke-linejoin="miter"/></svg>
<div class="t" style="left:1764.2px;top:640px;font-size:8.8px;color:#eeeeee;letter-spacing:-0.12px;">Symmetrical ruler</div>
<div style="left:1607px;top:545.8px;width:225.7px;height:1px;background:#2c2c2c;"></div>
<div style="left:1607px;top:572.0px;width:225.7px;height:1px;background:#2c2c2c;"></div>
<div style="left:1607px;top:598.1px;width:225.7px;height:1px;background:#2c2c2c;"></div>
<div style="left:1607px;top:624.1px;width:225.7px;height:1px;background:#2c2c2c;"></div>
<div style="left:1607px;top:650.1999999999999px;width:225.7px;height:1px;background:#2c2c2c;"></div>
<div style="left:1719px;top:546px;width:1px;height:105px;background:#2c2c2c;"></div>
<svg style="left:1690px;top:667px;" width="10" height="10" viewBox="0 0 10 10"><circle cx="5" cy="5" r="4.300" fill="#d8d8d8"/><path d="M5 2.500V7.500 M2.500 5H7.500" stroke="#3c3c3c" stroke-width="1.300"/></svg>
<div class="t" style="left:1704px;top:668px;font-size:8.8px;color:#e4e4e4;letter-spacing:-0.13px;">Add sub tool</div>
<div style="left:1607px;top:811px;width:236px;height:14px;background:#4a4a4a;"></div>
<svg style="left:1800px;top:812px;" width="42" height="12" viewBox="0 0 42 12"><g fill="none" stroke="#b8b8b8" stroke-width="1"><rect x="2.500" y="2" width="8" height="8" rx="1"/><path d="M6.500 3.500V8 M4.500 6 L6.500 8 L8.500 6"/><rect x="16" y="1.500" width="6.500" height="6.500" rx="1"/><rect x="18.500" y="4" width="6.500" height="6.500" rx="1" fill="#4a4a4a"/><path d="M21.750 5.500V9 M20 7.250H23.500"/><path d="M30.500 3H38.500 M31.500 3 L32 10.500 H37 L37.500 3 M33 1.500H36 M33.500 5V9 M35.500 5V9"/></g></svg>
<div style="left:1607px;top:825px;width:236px;height:14px;background:#393939;"></div>
<div style="left:1607px;top:839px;width:236px;height:32.2px;background:#4a4a4a;"></div>
<svg style="left:1610px;top:831.5px;" width="8" height="8" viewBox="0 0 8 8"><path d="M0.500 1.500H6.500M0.500 3.800H6.500M0.500 6.100H6.500" stroke="#666" stroke-width="0.900" fill="none"/></svg>
<div style="left:1620px;top:829.1px;width:129.7px;height:10px;background:#4a4a4a;"></div>
<div class="t" style="left:1640.4px;top:832px;font-size:8px;color:#e8e8e8;font-weight:bold;letter-spacing:-0.47px;">Tool property: Perspective ruler</div>
<svg style="left:1624px;top:830px;" width="13" height="11" viewBox="0 0 13 11"><path d="M2 9.500 L9 2 L10.500 3.500 L4 10.500Z" fill="#c8c8c8"/><circle cx="9.500" cy="9" r="1.800" fill="none" stroke="#c8c8c8" stroke-width="0.800"/></svg>
<div class="t" style="left:1607.8px;top:845px;font-size:8.6px;color:#e8e8e8;letter-spacing:-0.05px;">Perspective ruler</div>
<svg style="left:1827px;top:856px;" width="12" height="12" viewBox="0 0 12 12"><rect x="4.500" y="5.500" width="6.500" height="5" rx="0.800" fill="#c8c8c8"/><path d="M2 5.500V4 a2 2 0 0 1 4 0 V5.500" fill="none" stroke="#c8c8c8" stroke-width="1"/></svg>
<div style="left:1607px;top:871.2px;width:236px;height:146.8px;background:#3c3c3c;"></div>
<div class="t" style="left:1618.5px;top:877px;font-size:8.8px;color:#e4e4e4;letter-spacing:-0.38px;">Process</div>
<div style="left:1658.2px;top:873.6px;width:172.7px;height:14.2px;background:#585858;border:1px solid #707070;border-radius:2px;"></div>
<div class="t" style="left:1702.8px;top:877px;font-size:8.8px;color:#e8e8e8;letter-spacing:-0.13px;">Add vanishing point</div>
<svg style="left:1821px;top:875px;" width="8" height="12" viewBox="0 0 8 12"><path d="M1.500 4.500 L4 2 L6.500 4.500 M1.500 7.500 L4 10 L6.500 7.500" fill="none" stroke="#b0b0b0" stroke-width="1"/></svg>
<div style="left:1615px;top:891.5px;width:216px;height:1px;background:#525252;"></div>
<div style="left:1615px;top:914px;width:216px;height:1px;background:#525252;"></div>
<div style="left:1618px;top:898.4px;width:10.5px;height:10px;background:#5a5a5a;border:1px solid #727272;border-radius:2px;"></div>
<div class="t" style="left:1631.5px;top:899px;font-size:8.8px;color:#e8e8e8;letter-spacing:-0.15px;">Change perspective type</div>
<div style="left:1618px;top:921px;width:10.5px;height:10px;background:#5a5a5a;border:1px solid #727272;border-radius:2px;"></div>
<svg style="left:1618px;top:921px;" width="11" height="10" viewBox="0 0 11 10"><path d="M2.500 5 L4.500 7.500 L8.500 2.500" fill="none" stroke="#f4f4f4" stroke-width="1.300"/></svg>
<div class="t" style="left:1631.5px;top:921px;font-size:8.8px;color:#e8e8e8;letter-spacing:-0.14px;">Create at editing layer</div>
<div style="left:1607px;top:1018px;width:236px;height:15.5px;background:#4a4a4a;"></div>
<svg style="left:1813px;top:1019px;" width="30" height="13" viewBox="0 0 30 13"><g fill="none" stroke="#c0c0c0" stroke-width="1"><circle cx="7" cy="7" r="4.300"/><path d="M7 4.500V7.500 M5.500 6.500 L7 8 L8.500 6.500 M5 1.800 L7 2.700 L5.500 4"/><circle cx="20.500" cy="4.800" r="2.500"/><path d="M22.300 6.600 L26.500 10.800" stroke-width="2.200" stroke-linecap="round"/></g></svg>
<div style="left:1603.5px;top:17px;width:3px;height:1020px;background:#383838;"></div>
<div style="left:1605px;top:17px;width:1px;height:1020px;background:#2a2a2a;"></div>
<div style="left:1373px;top:1033.5px;width:470px;height:3.5px;background:#2a2a2a;"></div>
</body></html>
